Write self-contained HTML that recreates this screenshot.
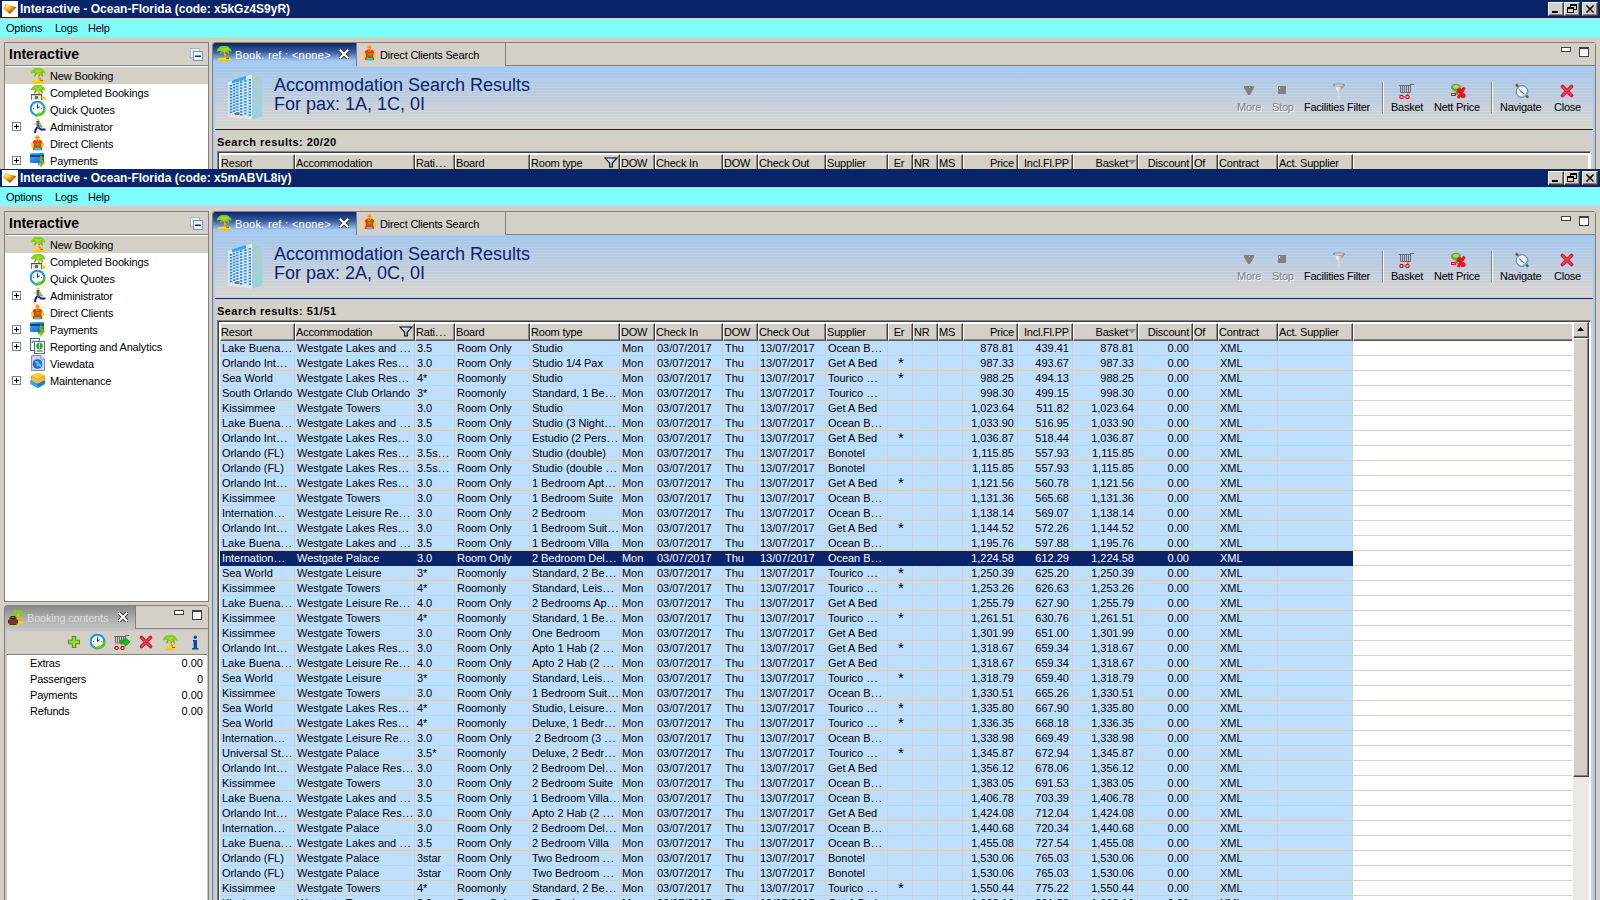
<!DOCTYPE html><html><head><meta charset="utf-8"><style>
*{margin:0;padding:0;box-sizing:border-box}
html,body{width:1600px;height:900px;overflow:hidden;background:#d4d0c8;font-family:"Liberation Sans",sans-serif;font-size:11px;color:#000}
.win{position:absolute;left:0;width:1600px;overflow:hidden;background:#d4d0c8}
.win>*,.win div,.win span,.win svg{position:absolute}
.ic{position:absolute;display:block}
.title{left:0;top:0;width:1600px;height:18px;background:#0a246a}
.ttxt{left:20px;top:1px;font-weight:bold;font-size:12px;color:#fff;line-height:16px;white-space:nowrap}
.tb{top:2px;width:16px;height:14px;background:#d4d0c8;border-top:1px solid #fff;border-left:1px solid #fff;border-right:1px solid #404040;border-bottom:1px solid #404040;box-shadow:inset -1px -1px 0 #808080}
.tbmin{left:3px;top:8px;width:6px;height:2px;background:#000}
.tb svg{left:-1px!important;top:-1px!important}
.tline{left:0;top:18px;width:1600px;height:1px;background:#d4d0c8}
.menu{left:0;top:19px;width:1600px;height:18px;background:#80ffff}
.menu span{top:2px;line-height:14px;white-space:nowrap;letter-spacing:-0.25px}
.lpanel{border:1px solid #808080;background:#fff;overflow:hidden}
.lphead{left:0;top:0;width:203px;height:23px;background:#d4d0c8;border-bottom:1px solid #808080}
.lptitle{left:4px;top:3px;font-weight:bold;font-size:14px;line-height:16px;white-space:nowrap}
.lptree{left:0;top:23px;width:203px;height:600px;background:#fff}
.tsel{left:0;width:203px;height:17px;background:#d4d0c8}
.exp{left:7px;width:9px;height:9px;border:1px solid #808080;background:#fff}
.exp:before{content:"";position:absolute;left:1px;top:3px;width:5px;height:1px;background:#000}
.exp:after{content:"";position:absolute;left:3px;top:1px;width:1px;height:5px;background:#000}
.titem{left:45px;top:1px;line-height:17px;white-space:nowrap;letter-spacing:-0.15px}
.bcpanel{border:1px solid #808080;border-radius:3px 3px 0 0;background:#c8c8c8}
.bctab{left:0;top:0;width:131px;height:25px;background:linear-gradient(#888888,#a8a8a8 40%,#c8c8c8)}
.bctabbar{left:130px;top:0;width:73px;height:23px;background:#d4d0c8;border-bottom:1px solid #808080;border-left:1px solid #808080;border-radius:0 2px 0 0}
.bctxt{left:22px;top:5px;color:#dcdcdc;line-height:14px;white-space:nowrap;letter-spacing:-0.2px}
.bctool{left:2px;top:25px;width:200px;height:24px;background:#d4d0c8;border-bottom:1px solid #808080}
.bcbody{left:2px;top:49px;width:200px;height:400px;background:#fff}
.bck{left:23px;line-height:16px;white-space:nowrap;letter-spacing:-0.2px}
.bcv{right:4px;line-height:16px;white-space:nowrap}
.folder{border:1px solid #808080;border-radius:3px 3px 0 0;background:#d4d0c8}
.tabstrip{left:0;top:0;width:1382px;height:23px;background:#d4d0c8;border-bottom:1px solid #808080}
.atab{left:0;top:0;width:143px;height:24px;background:linear-gradient(#0a246a 0px,#3a5ca0 9px,#a6caf0 18px,#a6caf0 24px);border-radius:2px 0 0 0}
.atxt{left:22px;top:5px;color:#fff;line-height:14px;white-space:nowrap;letter-spacing:0.3px}
.itab{left:143px;top:0;width:150px;height:24px;background:#d4d0c8;border-left:1px solid #808080;border-right:1px solid #808080;border-bottom:1px solid #808080}
.itxt{left:23px;top:5px;line-height:14px;white-space:nowrap;letter-spacing:-0.2px}
.blueside{top:23px;width:2px;height:900px;background:#a6caf0}
.blueside.l{left:0}
.blueside.r{left:1380px}
.hdr{left:2px;top:23px;width:1378px;height:63px;background:repeating-linear-gradient(rgba(255,255,255,0.06) 0 1px,rgba(0,0,0,0.015) 1px 3px),linear-gradient(#a6caf0,#c4d0e0 55%,#dcd8d0)}
.navyline{left:2px;top:86px;width:1378px;height:1px;background:#0a246a}
.htitle{left:274px;margin-top:1px;font-size:18px;color:#0a246a;line-height:20px;white-space:nowrap}
.tool{top:100px;line-height:14px;white-space:nowrap;letter-spacing:-0.25px}
.tool.dis{color:#808080;text-shadow:1px 1px 0 #fff}
.tsep{top:82px;width:2px;height:32px;border-left:1px solid #808080;border-right:1px solid #fff}
.sres{left:217px;top:135px;font-weight:bold;line-height:14px;white-space:nowrap;letter-spacing:0.45px}
.tbl{background:#fff;border-top:1px solid #808080;border-left:1px solid #808080;border-right:1px solid #fff;box-shadow:inset 1px 1px 0 #404040}
.hc{height:18px;background:#d4d0c8;border-top:1px solid #fff;border-left:1px solid #fff;border-right:1px solid #404040;border-bottom:1px solid #5c5a56;box-shadow:inset -1px -1px 0 #8c8984;overflow:hidden}
.ht{top:1px;left:0px;right:3px;line-height:14px;white-space:nowrap;letter-spacing:-0.2px}
.ht.alr{text-align:right}
.ht.alc{text-align:center}
.ht.hs{right:9px}
.hfil{right:1px;top:2px}
.hsort{right:1px;top:5px}
.gline{height:1px;background:#d4d0c8}
.row{height:15px}
.c{top:0;height:15px;background:#bfdfff;border-right:1px solid #d4d0c8;border-bottom:1px solid #d4d0c8;padding:0 0 0 2px;line-height:14px;white-space:pre;overflow:hidden;letter-spacing:-0.05px}
.c.alr{text-align:right;padding:0 3px 0 0;letter-spacing:0}
.c.alc{text-align:center}
.ast{position:static!important;font-size:15px;line-height:14px}
.el{position:static!important;letter-spacing:0.9px;margin-left:0.5px}
.row.sel .c{background:#0a246a;color:#fff;border-color:#0a246a}
.sbtrack{background-color:#ebe9e5}
.sbbtn{background:#d4d0c8;border-top:1px solid #fff;border-left:1px solid #fff;border-right:1px solid #404040;border-bottom:1px solid #404040;box-shadow:inset -1px -1px 0 #808080}
</style></head><body><div class="win" style="top:169px;height:731px"><div class="title"><svg class="ic" style="left:2px;top:1px" width="16" height="16" viewBox="0 0 16 16"><defs><radialGradient id="apg" cx="0.3" cy="0.25" r="0.85"><stop offset="0" stop-color="#fff070"/><stop offset="0.4" stop-color="#f0a818"/><stop offset="0.75" stop-color="#c85010"/><stop offset="1" stop-color="#b03808"/></radialGradient></defs><rect x="0" y="0" width="16" height="16" fill="#fff"/><path d="M1 7.5 L3.5 3 L14.5 6.2 L8 13 Z" fill="url(#apg)"/></svg><span class="ttxt">Interactive - Ocean-Florida (code: x5mABVL8iy)</span><div class="tb" style="left:1548px"><div class="tbmin"></div></div><div class="tb" style="left:1564px"><svg width="16" height="14" style="position:absolute;left:0;top:0"><rect x="6.5" y="2.5" width="6" height="5" fill="none" stroke="#000"/><rect x="6" y="2" width="7" height="2" fill="#000"/><rect x="3.5" y="5.5" width="6" height="5" fill="#d4d0c8" stroke="#000"/><rect x="3" y="5" width="7" height="2" fill="#000"/></svg></div><div class="tb" style="left:1582px"><svg width="16" height="14" style="position:absolute;left:0;top:0"><path d="M4.5 3.5 L11.5 10.5 M11.5 3.5 L4.5 10.5" stroke="#000" stroke-width="1.6"/></svg></div></div><div class="tline"></div><div class="menu"><span style="left:6px">Options</span><span style="left:55px">Logs</span><span style="left:88px">Help</span></div><div class="lpanel" style="left:4px;top:42px;width:205px;height:391px"><div class="lphead"><span class="lptitle">Interactive</span></div><svg class="ic" style="left:185px;top:5px" width="14" height="14" viewBox="0 0 14 14"><rect x="0.5" y="0.5" width="9" height="9" fill="#e8f0ff" stroke="#a8b8d0"/><rect x="3.5" y="3.5" width="9" height="9" fill="#f0f8ff" stroke="#8090b0"/><rect x="5" y="7.5" width="6" height="1.5" fill="#103070"/></svg><div class="lptree"><div class="tsel" style="top:1px"></div><svg class="ic" style="left:25px;top:1px" width="16" height="16" viewBox="0 0 16 16"><path d="M0.5 6.5 C1.5 2.5 5 0.5 8 1.2 C11 0.3 14.5 2 15.8 6.8 C14.5 6 13.5 5.8 12.5 6 C13.3 7.5 13.3 9 12.8 10 C11.8 8.3 10.5 7.2 9 6.8 L7.5 6.8 C6.5 7.3 5.5 8.3 4.5 10 C4 9 4 7.5 5 6.2 C3.8 5.8 2.5 5.8 0.5 6.5Z" fill="#7ed020"/><path d="M3 4 C5 3 7 3 8 4 C9 3 12 3 13 4.5 C11 4 9.5 4.5 8.5 5.5 C7 4.5 5 4 3 4Z" fill="#a8e040"/><path d="M6 6.5 C5.5 7.5 5 8.5 4.8 9.5 M10.5 7 C11.5 8 12 9 12.3 9.8" stroke="#50a810" stroke-width="0.8" fill="none"/><path d="M7.8 5 C8.5 8 9.8 10.5 10 14" stroke="#f0b020" stroke-width="2" fill="none"/><path d="M9 8 L10 8.5 M9.5 11 L10.5 11.5" stroke="#b05010" stroke-width="1"/><ellipse cx="8.5" cy="14.3" rx="7" ry="1.9" fill="#ffd800"/><path d="M3 15 L14 15 L12.5 16.3 L5 16.3Z" fill="#f0c000"/><path d="M10 13.2 L13 13.5" stroke="#604010" stroke-width="0.8"/></svg><span class="titem" style="top:2px">New Booking</span><svg class="ic" style="left:25px;top:18px" width="16" height="16" viewBox="0 0 16 16"><path d="M0.5 6.5 C1.5 2.5 5 0.5 8 1.2 C11 0.3 14.5 2 15.8 6.8 C14.5 6 13.5 5.8 12.5 6 C13.3 7.5 13.3 9 12.8 10 C11.8 8.3 10.5 7.2 9 6.8 L7.5 6.8 C6.5 7.3 5.5 8.3 4.5 10 C4 9 4 7.5 5 6.2 C3.8 5.8 2.5 5.8 0.5 6.5Z" fill="#7ed020"/><path d="M3 4 C5 3 7 3 8 4 C9 3 12 3 13 4.5 C11 4 9.5 4.5 8.5 5.5 C7 4.5 5 4 3 4Z" fill="#a8e040"/><path d="M6 6.5 C5.5 7.5 5 8.5 4.8 9.5 M10.5 7 C11.5 8 12 9 12.3 9.8" stroke="#50a810" stroke-width="0.8" fill="none"/><path d="M7.8 5 C8.5 8 9.8 10.5 10 12" stroke="#f0b020" stroke-width="2" fill="none"/><rect x="1.5" y="10.5" width="10" height="6" fill="#f0f0e0" stroke="#707060" stroke-width="1"/><rect x="1" y="10" width="11" height="1.2" fill="#505040"/><circle cx="6.5" cy="13.5" r="1.8" fill="#706060"/><path d="M12 12.5 L15 12.5 L15.5 15.5 L12 16Z" fill="#ffd000"/></svg><span class="titem" style="top:19px">Completed Bookings</span><svg class="ic" style="left:25px;top:35px" width="16" height="16" viewBox="0 0 16 16"><circle cx="7.5" cy="7.5" r="6.8" fill="#fff" stroke="#1898f0" stroke-width="2.2"/><path d="M7.5 3.5 L7.5 7.5 L10 5.5" stroke="#303030" stroke-width="1" fill="none"/><circle cx="3.5" cy="7.5" r="0.6" fill="#303030"/><circle cx="11.5" cy="7.5" r="0.6" fill="#303030"/><circle cx="7.5" cy="3" r="0.5" fill="#303030"/><path d="M4 12.5 C7 14 11 13 13.5 9 L15 5.5 L15.5 10 C14 14 10 15.8 7 14.5 L6 16.5Z" fill="#58c018"/><path d="M6.5 12 L10.5 11 L9 14.5Z" fill="#80d838"/></svg><span class="titem" style="top:36px">Quick Quotes</span><div class="exp" style="top:56px"></div><svg class="ic" style="left:25px;top:52px" width="16" height="16" viewBox="0 0 16 16"><path d="M6 1 L9 0.5 L10 2.5 L8 3.5Z" fill="#f8c830"/><path d="M6.5 3 L9.5 3 L11 8 L8 9.5 L6.5 8Z" fill="#4060b0"/><path d="M9 4 L11.5 5 L12 9 L9.5 9Z" fill="#f0c030"/><path d="M10 7 L13 8.5 L11 10Z" fill="#50a030"/><path d="M6.5 5.5 L3.5 6.5" stroke="#f8c030" stroke-width="1.3"/><path d="M7.5 9 L5.5 12 L5 15" stroke="#102080" stroke-width="2" fill="none"/><path d="M8.5 9.5 L11 11.5 L15.5 11.5" stroke="#102080" stroke-width="1.8" fill="none"/></svg><span class="titem" style="top:53px">Administrator</span><svg class="ic" style="left:25px;top:69px" width="16" height="16" viewBox="0 0 16 16"><circle cx="7.5" cy="2.5" r="2.2" fill="#f8b010"/><ellipse cx="7.5" cy="2.3" rx="1" ry="0.6" fill="#ff6010"/><path d="M2.5 8 C2.5 5.5 4.5 4.5 7.5 4.5 C10.5 4.5 12.5 5.5 12.5 8 L12 15 L3 15Z" fill="#f83808"/><path d="M2.5 7 C0.5 8 0.5 11 2.5 13 L4 12 L3.5 8Z" fill="#ffd020"/><path d="M12.5 7 C14.5 8 14.5 11 12.5 13 L11 12 L11.5 8Z" fill="#ffd020"/><rect x="6.5" y="8" width="3" height="2.5" fill="#20d040"/><rect x="4.5" y="13" width="6" height="2.5" fill="#20d0e0"/><path d="M6 5 L7.5 7 L9 5" stroke="#ffb020" stroke-width="0.8" fill="none"/></svg><span class="titem" style="top:70px">Direct Clients</span><div class="exp" style="top:90px"></div><svg class="ic" style="left:25px;top:86px" width="16" height="16" viewBox="0 0 16 16"><defs><linearGradient id="pyg" x1="0" y1="0" x2="1" y2="1"><stop offset="0" stop-color="#40b0f8"/><stop offset="1" stop-color="#1060c0"/></linearGradient></defs><rect x="0" y="1" width="14" height="10" rx="1" fill="url(#pyg)"/><rect x="0" y="3" width="14" height="1.8" fill="#0c3870"/><path d="M12 5 C9 5 8.5 8.5 11 9 C13 9.5 13 11.5 10.5 11.5 C9 11.5 8 11 8 11 L8.5 13 C9.5 13.5 13 13.5 14 11.5 C15 9 12 8 11 7.5 C10 7 10.5 6 12 6.2 L13.5 6.8 L14 5.2Z" fill="#90d020" stroke="#508010" stroke-width="0.6"/><path d="M11 3.5 L11 15.5" stroke="#80c020" stroke-width="1.2"/></svg><span class="titem" style="top:87px">Payments</span><div class="exp" style="top:107px"></div><svg class="ic" style="left:25px;top:103px" width="16" height="16" viewBox="0 0 16 16"><rect x="0.5" y="0.5" width="9" height="12" fill="#f8f8f8" stroke="#507090"/><rect x="4.5" y="3.5" width="10" height="12" fill="#fff" stroke="#507090"/><circle cx="9.5" cy="8" r="3.3" fill="#20b030"/><rect x="9" y="5.5" width="1" height="3" fill="#fff"/><rect x="9" y="9.3" width="1" height="1" fill="#fff"/><rect x="6.5" y="12.5" width="6" height="1" fill="#703020"/><path d="M2 5 C2 3 4 3 4.5 4" stroke="#20b030" stroke-width="1.2" fill="none"/></svg><span class="titem" style="top:104px">Reporting and Analytics</span><svg class="ic" style="left:25px;top:120px" width="16" height="16" viewBox="0 0 16 16"><path d="M1.5 0.5 L11 0.5 L14.5 4 L14.5 15.5 L1.5 15.5Z" fill="#c8d4f0" stroke="#8090a8"/><path d="M11 0.5 L11 4 L14.5 4" fill="#fff" stroke="#8090a8"/><circle cx="7.5" cy="9" r="4.8" fill="#5040c0"/><circle cx="8" cy="9" r="3.8" fill="#2080e0"/><path d="M5 7 C7 6 9 8 8 10 C10 9 11 10 10 12" stroke="#40e0f0" stroke-width="1.5" fill="none"/></svg><span class="titem" style="top:121px">Viewdata</span><div class="exp" style="top:141px"></div><svg class="ic" style="left:25px;top:137px" width="16" height="16" viewBox="0 0 16 16"><path d="M0.5 8 L7 11.5 L15 8 L15 12 L8 16 L0.5 12Z" fill="#1880e0"/><path d="M0.5 8 L7 11.5 L8 16 L0.5 12Z" fill="#30a8f0"/><path d="M1 3.5 L8 0.5 L15 3 L8 6.5Z" fill="#f8d030"/><path d="M1 3.5 L8 6.5 L15 3 L15 8 L8 11.5 L1 8Z" fill="#f0a018"/><path d="M2 5.5 L8 8.5 L14 5.5 M2 7 L8 10 L14 7" stroke="#f8e060" stroke-width="0.8" fill="none"/></svg><span class="titem" style="top:138px">Maintenance</span></div></div><div class="bcpanel" style="left:4px;top:436px;width:205px;height:400px"><div class="bctab"><span class="bctxt">Booking contents</span></div><div class="bctabbar"></div><svg class="ic" style="left:3px;top:3px" width="16" height="16" viewBox="0 0 16 16"><path d="M3.5 5 C4.5 1.5 8 0.5 10 1.2 C12.5 0.5 15.5 2 16 5.5 C15 5 14 5 13 5.2 C13.8 6.5 13.8 8 13.3 9 C12.3 7.5 11.5 6.5 10.5 6 L9.5 6 C8.5 6.5 7.5 7.5 6.5 9 C6 8 6 6.5 7 5.3 C6 5 5 5 3.5 5Z" fill="#7ed020"/><path d="M10 5 C10.5 8 11 10 11 14" stroke="#f0b020" stroke-width="1.8" fill="none"/><rect x="0.5" y="9" width="9" height="7" rx="1" fill="#6c4028" stroke="#301808" stroke-width="0.8"/><rect x="3" y="7.5" width="4" height="2" fill="none" stroke="#301808" stroke-width="0.8"/><rect x="0" y="9" width="1.5" height="1.5" fill="#ffd000"/><rect x="8.5" y="9" width="1.5" height="1.5" fill="#ffd000"/><rect x="0" y="14.5" width="1.5" height="1.5" fill="#ffd000"/><rect x="8.5" y="14.5" width="1.5" height="1.5" fill="#ffd000"/><path d="M10 12.5 L15 12 L16 14 L10 15.5Z" fill="#ffd000"/></svg><svg class="ic" style="left:113px;top:6px" width="10" height="10" viewBox="0 0 10 10"><path d="M1.5 1.5 L8.5 8.5 M8.5 1.5 L1.5 8.5" stroke="#303030" stroke-width="4" stroke-linecap="square"/><path d="M1.5 1.5 L8.5 8.5 M8.5 1.5 L1.5 8.5" stroke="#fff" stroke-width="2.2" stroke-linecap="square"/></svg><svg class="ic" style="left:169px;top:4px" width="10" height="5" viewBox="0 0 10 5"><rect x="0.5" y="0.5" width="9" height="4" fill="#fff" stroke="#404040"/></svg><svg class="ic" style="left:187px;top:4px" width="10" height="11" viewBox="0 0 10 11"><rect x="0.5" y="0.5" width="9" height="9" fill="#fff" stroke="#404040"/><rect x="0.5" y="0.5" width="9" height="1.5" fill="#404040"/></svg><div class="bctool"></div><svg class="ic" style="left:61px;top:28px" width="16" height="16" viewBox="0 0 16 16"><path d="M8 2 L8 14 M2 8 L14 8" stroke="#408020" stroke-width="4.5"/><path d="M8 2.8 L8 13.2 M2.8 8 L13.2 8" stroke="#a0d040" stroke-width="2.8"/></svg><svg class="ic" style="left:85px;top:28px" width="16" height="16" viewBox="0 0 16 16"><circle cx="7.5" cy="7.5" r="6.8" fill="#fff" stroke="#1898f0" stroke-width="2.2"/><path d="M7.5 3.5 L7.5 7.5 L10 5.5" stroke="#303030" stroke-width="1" fill="none"/><circle cx="3.5" cy="7.5" r="0.6" fill="#303030"/><circle cx="11.5" cy="7.5" r="0.6" fill="#303030"/><circle cx="7.5" cy="3" r="0.5" fill="#303030"/><path d="M4 12.5 C7 14 11 13 13.5 9 L15 5.5 L15.5 10 C14 14 10 15.8 7 14.5 L6 16.5Z" fill="#58c018"/><path d="M6.5 12 L10.5 11 L9 14.5Z" fill="#80d838"/></svg><svg class="ic" style="left:109px;top:28px" width="16" height="16" viewBox="0 0 16 16"><path d="M0 2.5 L11 2.5 M1.5 2.5 L1.5 8.5 M3.5 2.5 L3.5 8.5 M5.5 2.5 L5.5 8.5 M7.5 2.5 L7.5 8.5 M9.5 2.5 L9.5 8.5 M1.5 9 L11 9 M11.5 1 L11.5 9 M11.5 1.5 L15 1.5" stroke="#6c6c6c" stroke-width="1" fill="none"/><circle cx="2.5" cy="14" r="1.6" fill="#fff" stroke="#f00000" stroke-width="1.2"/><circle cx="8.5" cy="14" r="1.6" fill="#fff" stroke="#f00000" stroke-width="1.2"/><path d="M6.5 6 L11 6 L11 3.5 L16 8 L11 12.5 L11 10 L6.5 10Z" fill="#10c020" stroke="#087010" stroke-width="0.6"/></svg><svg class="ic" style="left:133px;top:28px" width="16" height="16" viewBox="0 0 16 16"><path d="M3.5 3.5 L12.5 12.5 M12.5 3.5 L3.5 12.5" stroke="#d81830" stroke-width="3.6" stroke-linecap="round"/><path d="M4 4 L12 12 M12 4 L4 12" stroke="#f04858" stroke-width="1.4" stroke-linecap="round"/></svg><svg class="ic" style="left:157px;top:28px" width="16" height="16" viewBox="0 0 16 16"><path d="M0.5 6.5 C1.5 2.5 5 0.5 8 1.2 C11 0.3 14.5 2 15.8 6.8 C14.5 6 13.5 5.8 12.5 6 C13.3 7.5 13.3 9 12.8 10 C11.8 8.3 10.5 7.2 9 6.8 L7.5 6.8 C6.5 7.3 5.5 8.3 4.5 10 C4 9 4 7.5 5 6.2 C3.8 5.8 2.5 5.8 0.5 6.5Z" fill="#7ed020"/><path d="M3 4 C5 3 7 3 8 4 C9 3 12 3 13 4.5 C11 4 9.5 4.5 8.5 5.5 C7 4.5 5 4 3 4Z" fill="#a8e040"/><path d="M6 6.5 C5.5 7.5 5 8.5 4.8 9.5 M10.5 7 C11.5 8 12 9 12.3 9.8" stroke="#50a810" stroke-width="0.8" fill="none"/><path d="M7.8 5 C8.5 8 9.8 10.5 10 14" stroke="#f0b020" stroke-width="2" fill="none"/><path d="M9 8 L10 8.5 M9.5 11 L10.5 11.5" stroke="#b05010" stroke-width="1"/><ellipse cx="8.5" cy="14.3" rx="7" ry="1.9" fill="#ffd800"/><path d="M3 15 L14 15 L12.5 16.3 L5 16.3Z" fill="#f0c000"/><path d="M10 13.2 L13 13.5" stroke="#604010" stroke-width="0.8"/></svg><svg class="ic" style="left:182px;top:28px" width="16" height="16" viewBox="0 0 16 16"><path d="M6 6 L10 6 L10 14 L11.5 14 L11.5 15.5 L5 15.5 L5 14 L6.5 14 L6.5 7.5 L6 7.5Z" fill="#0c4aa8"/><circle cx="8.3" cy="3.3" r="1.7" fill="#0c4aa8"/></svg><div class="bcbody"><span class="bck" style="top:0px">Extras</span><span class="bcv" style="top:0px">0.00</span><span class="bck" style="top:16px">Passengers</span><span class="bcv" style="top:16px">0</span><span class="bck" style="top:32px">Payments</span><span class="bcv" style="top:32px">0.00</span><span class="bck" style="top:48px">Refunds</span><span class="bcv" style="top:48px">0.00</span></div></div><div class="folder" style="left:212px;top:42px;width:1384px;height:900px"><div class="tabstrip"></div><div class="atab"><span class="atxt">Book. ref.: &lt;none&gt;</span></div><svg class="ic" style="left:3px;top:2px" width="17" height="17" viewBox="0 0 17 17"><path d="M0.5 6.5 C1.5 2.5 5 0.5 8 1.2 C11 0.3 14.5 2 15.8 6.8 C14.5 6 13.5 5.8 12.5 6 C13.3 7.5 13.3 9 12.8 10 C11.8 8.3 10.5 7.2 9 6.8 L7.5 6.8 C6.5 7.3 5.5 8.3 4.5 10 C4 9 4 7.5 5 6.2 C3.8 5.8 2.5 5.8 0.5 6.5Z" fill="#7ed020"/><path d="M3 4 C5 3 7 3 8 4 C9 3 12 3 13 4.5 C11 4 9.5 4.5 8.5 5.5 C7 4.5 5 4 3 4Z" fill="#a8e040"/><path d="M6 6.5 C5.5 7.5 5 8.5 4.8 9.5 M10.5 7 C11.5 8 12 9 12.3 9.8" stroke="#50a810" stroke-width="0.8" fill="none"/><path d="M7.8 5 C8.5 8 9.8 10.5 10 14" stroke="#f0b020" stroke-width="2" fill="none"/><path d="M9 8 L10 8.5 M9.5 11 L10.5 11.5" stroke="#b05010" stroke-width="1"/><ellipse cx="8.5" cy="14.3" rx="7" ry="1.9" fill="#ffd800"/><path d="M3 15 L14 15 L12.5 16.3 L5 16.3Z" fill="#f0c000"/><path d="M10 13.2 L13 13.5" stroke="#604010" stroke-width="0.8"/></svg><svg class="ic" style="left:126px;top:6px" width="10" height="10" viewBox="0 0 10 10"><path d="M1.5 1.5 L8.5 8.5 M8.5 1.5 L1.5 8.5" stroke="#303030" stroke-width="4" stroke-linecap="square"/><path d="M1.5 1.5 L8.5 8.5 M8.5 1.5 L1.5 8.5" stroke="#fff" stroke-width="2.2" stroke-linecap="square"/></svg><div class="itab"><span class="itxt">Direct Clients Search</span></div><svg class="ic" style="left:149px;top:2px" width="16" height="16" viewBox="0 0 16 16"><circle cx="7.5" cy="2.5" r="2.2" fill="#f8b010"/><ellipse cx="7.5" cy="2.3" rx="1" ry="0.6" fill="#ff6010"/><path d="M2.5 8 C2.5 5.5 4.5 4.5 7.5 4.5 C10.5 4.5 12.5 5.5 12.5 8 L12 15 L3 15Z" fill="#f83808"/><path d="M2.5 7 C0.5 8 0.5 11 2.5 13 L4 12 L3.5 8Z" fill="#ffd020"/><path d="M12.5 7 C14.5 8 14.5 11 12.5 13 L11 12 L11.5 8Z" fill="#ffd020"/><rect x="6.5" y="8" width="3" height="2.5" fill="#20d040"/><rect x="4.5" y="13" width="6" height="2.5" fill="#20d0e0"/><path d="M6 5 L7.5 7 L9 5" stroke="#ffb020" stroke-width="0.8" fill="none"/></svg><svg class="ic" style="left:1348px;top:4px" width="10" height="5" viewBox="0 0 10 5"><rect x="0.5" y="0.5" width="9" height="4" fill="#fff" stroke="#404040"/></svg><svg class="ic" style="left:1366px;top:4px" width="10" height="11" viewBox="0 0 10 11"><rect x="0.5" y="0.5" width="9" height="9" fill="#fff" stroke="#404040"/><rect x="0.5" y="0.5" width="9" height="1.5" fill="#404040"/></svg><div class="blueside l"></div><div class="blueside r"></div><div class="hdr"></div><div class="navyline"></div></div><svg class="ic" style="left:228px;top:74px" width="36" height="48" viewBox="0 0 36 48"><defs><linearGradient id="bgr" x1="0" y1="0" x2="1" y2="1"><stop offset="0" stop-color="#b8c8c8"/><stop offset="1" stop-color="#90d8e0"/></linearGradient></defs><path d="M0 8 L24 0.5 L24 45.6 L0 42.7 Z" fill="#e4eaec"/><path d="M24 0.5 L34 4.5 L34 42.7 L24 45.6 Z" fill="url(#bgr)"/><path d="M4 6.5 L18 2 L18 5.5 L4 9.5Z" fill="#30a8f0"/><rect x="1.8" y="11.0" width="2.4" height="1.7" fill="#1890e8"/><rect x="1.8" y="13.9" width="2.4" height="1.7" fill="#1890e8"/><rect x="1.8" y="16.9" width="2.4" height="1.7" fill="#1890e8"/><rect x="1.8" y="19.9" width="2.4" height="1.7" fill="#1890e8"/><rect x="1.8" y="22.8" width="2.4" height="1.7" fill="#1890e8"/><rect x="1.8" y="25.8" width="2.4" height="1.7" fill="#1890e8"/><rect x="1.8" y="28.7" width="2.4" height="1.7" fill="#1890e8"/><rect x="1.8" y="31.7" width="2.4" height="1.7" fill="#1890e8"/><rect x="1.8" y="34.6" width="2.4" height="1.7" fill="#1890e8"/><rect x="1.8" y="37.5" width="2.4" height="1.7" fill="#1890e8"/><rect x="5.0" y="9.8" width="2.4" height="1.7" fill="#1890e8"/><rect x="5.0" y="12.8" width="2.4" height="1.7" fill="#1890e8"/><rect x="5.0" y="15.7" width="2.4" height="1.7" fill="#1890e8"/><rect x="5.0" y="18.7" width="2.4" height="1.7" fill="#1890e8"/><rect x="5.0" y="21.6" width="2.4" height="1.7" fill="#1890e8"/><rect x="5.0" y="24.6" width="2.4" height="1.7" fill="#1890e8"/><rect x="5.0" y="27.5" width="2.4" height="1.7" fill="#1890e8"/><rect x="5.0" y="30.5" width="2.4" height="1.7" fill="#1890e8"/><rect x="5.0" y="33.4" width="2.4" height="1.7" fill="#1890e8"/><rect x="5.0" y="36.4" width="2.4" height="1.7" fill="#1890e8"/><rect x="8.2" y="8.6" width="2.4" height="1.7" fill="#1890e8"/><rect x="8.2" y="11.6" width="2.4" height="1.7" fill="#1890e8"/><rect x="8.2" y="14.5" width="2.4" height="1.7" fill="#1890e8"/><rect x="8.2" y="17.5" width="2.4" height="1.7" fill="#1890e8"/><rect x="8.2" y="20.4" width="2.4" height="1.7" fill="#1890e8"/><rect x="8.2" y="23.4" width="2.4" height="1.7" fill="#1890e8"/><rect x="8.2" y="26.3" width="2.4" height="1.7" fill="#1890e8"/><rect x="8.2" y="29.2" width="2.4" height="1.7" fill="#1890e8"/><rect x="8.2" y="32.2" width="2.4" height="1.7" fill="#1890e8"/><rect x="8.2" y="35.1" width="2.4" height="1.7" fill="#1890e8"/><rect x="8.2" y="38.1" width="2.4" height="1.7" fill="#1890e8"/><rect x="12.0" y="7.4" width="2.4" height="1.7" fill="#1890e8"/><rect x="12.0" y="10.4" width="2.4" height="1.7" fill="#1890e8"/><rect x="12.0" y="13.3" width="2.4" height="1.7" fill="#1890e8"/><rect x="12.0" y="16.2" width="2.4" height="1.7" fill="#1890e8"/><rect x="12.0" y="19.2" width="2.4" height="1.7" fill="#1890e8"/><rect x="12.0" y="22.1" width="2.4" height="1.7" fill="#1890e8"/><rect x="12.0" y="25.1" width="2.4" height="1.7" fill="#1890e8"/><rect x="12.0" y="28.1" width="2.4" height="1.7" fill="#1890e8"/><rect x="12.0" y="31.0" width="2.4" height="1.7" fill="#1890e8"/><rect x="12.0" y="34.0" width="2.4" height="1.7" fill="#1890e8"/><rect x="12.0" y="36.9" width="2.4" height="1.7" fill="#1890e8"/><rect x="12.0" y="39.9" width="2.4" height="1.7" fill="#1890e8"/><rect x="16.2" y="6.2" width="2.4" height="1.7" fill="#1890e8"/><rect x="16.2" y="9.2" width="2.4" height="1.7" fill="#1890e8"/><rect x="16.2" y="12.1" width="2.4" height="1.7" fill="#1890e8"/><rect x="16.2" y="15.1" width="2.4" height="1.7" fill="#1890e8"/><rect x="16.2" y="18.0" width="2.4" height="1.7" fill="#1890e8"/><rect x="16.2" y="20.9" width="2.4" height="1.7" fill="#1890e8"/><rect x="16.2" y="23.9" width="2.4" height="1.7" fill="#1890e8"/><rect x="16.2" y="26.9" width="2.4" height="1.7" fill="#1890e8"/><rect x="16.2" y="29.8" width="2.4" height="1.7" fill="#1890e8"/><rect x="16.2" y="32.8" width="2.4" height="1.7" fill="#1890e8"/><rect x="16.2" y="35.7" width="2.4" height="1.7" fill="#1890e8"/><rect x="16.2" y="38.7" width="2.4" height="1.7" fill="#1890e8"/><rect x="20.6" y="5.0" width="2.4" height="1.7" fill="#1890e8"/><rect x="20.6" y="8.0" width="2.4" height="1.7" fill="#1890e8"/><rect x="20.6" y="10.9" width="2.4" height="1.7" fill="#1890e8"/><rect x="20.6" y="13.9" width="2.4" height="1.7" fill="#1890e8"/><rect x="20.6" y="16.8" width="2.4" height="1.7" fill="#1890e8"/><rect x="20.6" y="19.8" width="2.4" height="1.7" fill="#1890e8"/><rect x="20.6" y="22.7" width="2.4" height="1.7" fill="#1890e8"/><rect x="20.6" y="25.7" width="2.4" height="1.7" fill="#1890e8"/><rect x="20.6" y="28.6" width="2.4" height="1.7" fill="#1890e8"/><rect x="20.6" y="31.6" width="2.4" height="1.7" fill="#1890e8"/><rect x="20.6" y="34.5" width="2.4" height="1.7" fill="#1890e8"/><rect x="20.6" y="37.5" width="2.4" height="1.7" fill="#1890e8"/><rect x="20.6" y="40.4" width="2.4" height="1.7" fill="#1890e8"/><path d="M1.2 10.0 L1.2 43.0" stroke="#c0c8cc" stroke-width="0.5"/><path d="M4.4 8.5 L4.4 43.5" stroke="#c0c8cc" stroke-width="0.5"/><path d="M7.6 7.0 L7.6 44.0" stroke="#c0c8cc" stroke-width="0.5"/><path d="M11.4 5.5 L11.4 44.5" stroke="#c0c8cc" stroke-width="0.5"/><path d="M15.6 4.0 L15.6 45.0" stroke="#c0c8cc" stroke-width="0.5"/><path d="M20.0 2.5 L20.0 45.5" stroke="#c0c8cc" stroke-width="0.5"/><path d="M6 39 L12 38.5 L11 41 L7 41Z" fill="#707878"/></svg><div class="htitle" style="top:74px">Accommodation Search Results</div><div class="htitle" style="top:93px">For pax: 2A, 0C, 0I</div><svg class="ic" style="left:1241px;top:83px" width="16" height="16" viewBox="0 0 16 16"><path d="M3 3 L13 3 L13 5 L9 12 L7 12 L3 5 Z" fill="#808080"/><rect x="8" y="4" width="1" height="1" fill="#fff"/></svg><span class="tool dis" style="left:1237px">More</span><svg class="ic" style="left:1276px;top:83px" width="16" height="16" viewBox="0 0 16 16"><rect x="2" y="3" width="8" height="8" fill="#808080"/><rect x="3" y="4" width="1" height="2" fill="#fff"/></svg><span class="tool dis" style="left:1272px">Stop</span><svg class="ic" style="left:1331px;top:83px" width="16" height="16" viewBox="0 0 16 16"><defs><linearGradient id="fng" x1="0" x2="1"><stop offset="0" stop-color="#a8a8a8"/><stop offset="0.35" stop-color="#f4f4f4"/><stop offset="0.7" stop-color="#b0b0b0"/><stop offset="1" stop-color="#787878"/></linearGradient></defs><path d="M2 2 L14 2 L9 9 L8.8 15.5 L7.4 15.5 L7.2 9 Z" fill="url(#fng)"/><ellipse cx="8" cy="2" rx="6" ry="1.6" fill="#8c8c8c"/><ellipse cx="8" cy="2.2" rx="4.5" ry="0.9" fill="#d0d0d0"/></svg><span class="tool" style="left:1304px">Facilities Filter</span><svg class="ic" style="left:1399px;top:83px" width="16" height="16" viewBox="0 0 16 16"><path d="M0 2.5 L11 2.5 M1.5 2.5 L1.5 9 M3.5 2.5 L3.5 9 M5.5 2.5 L5.5 9 M7.5 2.5 L7.5 9 M9.5 2.5 L9.5 9 M1.5 9.5 L11.5 9.5 M11.5 1 L11.5 9.5 M11.5 1.5 L15 1.5 M9.5 9.5 L8.5 12" stroke="#6c6c6c" stroke-width="1" fill="none"/><circle cx="2.5" cy="14" r="1.6" fill="#fff" stroke="#f00000" stroke-width="1.2"/><circle cx="8.5" cy="14" r="1.6" fill="#fff" stroke="#f00000" stroke-width="1.2"/><path d="M4.2 14 L6.8 14" stroke="#707070"/></svg><span class="tool" style="left:1391px">Basket</span><svg class="ic" style="left:1450px;top:83px" width="16" height="16" viewBox="0 0 16 16"><ellipse cx="6" cy="4.5" rx="5" ry="3.8" fill="#6aa828"/><ellipse cx="6" cy="3.8" rx="3" ry="1.8" fill="#b0d870"/><path d="M6 8 L9 8 L8 12 L5 11Z" fill="#58a020"/><circle cx="9.5" cy="7.5" r="2.6" fill="#f01020"/><circle cx="13" cy="12.5" r="2.6" fill="#f01020"/><path d="M14.5 4.5 L8 15" stroke="#f01020" stroke-width="3"/><rect x="1" y="10" width="5" height="3" fill="#f01020"/><rect x="2" y="11" width="3" height="1" fill="#ffa0a0"/></svg><span class="tool" style="left:1434px">Nett Price</span><svg class="ic" style="left:1514px;top:83px" width="16" height="16" viewBox="0 0 16 16"><path d="M1 2 L3 0.5 L5 3 L3 4.5Z" fill="#805020"/><path d="M11 13 L13 11.5 L15 14 L13 15.5Z" fill="#805020"/><circle cx="8" cy="8.5" r="5.8" fill="#f0f4f8" stroke="#3080c0" stroke-width="1"/><path d="M8.5 13.5 A5 5 0 0 0 13 9" stroke="#40d0f0" stroke-width="1.5" fill="none"/><path d="M4 5 L8 8.5 L7 9.5Z" fill="#2080e0"/><path d="M7 9.5 L8 8.5 L12 12Z" fill="#f02010"/></svg><span class="tool" style="left:1500px">Navigate</span><svg class="ic" style="left:1559px;top:83px" width="16" height="16" viewBox="0 0 16 16"><path d="M3.5 3.5 L12.5 12.5 M12.5 3.5 L3.5 12.5" stroke="#d81830" stroke-width="3.6" stroke-linecap="round"/><path d="M4 4 L12 12 M12 4 L4 12" stroke="#f04858" stroke-width="1.4" stroke-linecap="round"/></svg><span class="tool" style="left:1554px">Close</span><div class="tsep" style="left:1382px"></div><div class="tsep" style="left:1491px"></div><div class="sres">Search results: 51/51</div><div class="tbl" style="left:217px;top:151px;width:1374px;height:900px"><div class="hc" style="left:2px;top:2px;width:75px"><span class="ht all">Resort</span></div><div class="hc" style="left:77px;top:2px;width:120px"><span class="ht all">Accommodation</span><svg class="hfil" width="14" height="11" viewBox="0 0 14 11"><defs><linearGradient id="flg" x1="0" x2="1"><stop offset="0" stop-color="#fff"/><stop offset="1" stop-color="#90b0e0"/></linearGradient></defs><path d="M1 1 L13 1 L8.3 6.2 L8.3 10 L5.7 10 L5.7 6.2 Z" fill="url(#flg)" stroke="#000" stroke-width="1.1" stroke-linejoin="miter"/></svg></div><div class="hc" style="left:197px;top:2px;width:40px"><span class="ht all">Rati<span class="el">...</span></span></div><div class="hc" style="left:237px;top:2px;width:75px"><span class="ht all">Board</span></div><div class="hc" style="left:312px;top:2px;width:90px"><span class="ht all">Room type</span></div><div class="hc" style="left:402px;top:2px;width:35px"><span class="ht all">DOW</span></div><div class="hc" style="left:437px;top:2px;width:68px"><span class="ht all">Check In</span></div><div class="hc" style="left:505px;top:2px;width:35px"><span class="ht all">DOW</span></div><div class="hc" style="left:540px;top:2px;width:68px"><span class="ht all">Check Out</span></div><div class="hc" style="left:608px;top:2px;width:62px"><span class="ht all">Supplier</span></div><div class="hc" style="left:670px;top:2px;width:25px"><span class="ht alc">Er</span></div><div class="hc" style="left:695px;top:2px;width:25px"><span class="ht all">NR</span></div><div class="hc" style="left:720px;top:2px;width:25px"><span class="ht all">MS</span></div><div class="hc" style="left:745px;top:2px;width:55px"><span class="ht alr">Price</span></div><div class="hc" style="left:800px;top:2px;width:55px"><span class="ht alr">Incl.Fl.PP</span></div><div class="hc" style="left:855px;top:2px;width:65px"><span class="ht alr hs">Basket</span><svg class="hsort" width="8" height="5" viewBox="0 0 8 5"><path d="M0 0 L8 0 L4 4.5 Z" fill="#8c8c8c"/></svg></div><div class="hc" style="left:920px;top:2px;width:55px"><span class="ht alr">Discount</span></div><div class="hc" style="left:975px;top:2px;width:25px"><span class="ht all">Of</span></div><div class="hc" style="left:1000px;top:2px;width:60px"><span class="ht all">Contract</span></div><div class="hc" style="left:1060px;top:2px;width:75px"><span class="ht all">Act. Supplier</span></div><div class="hc" style="left:1135px;top:2px;width:219px;border-right:none;box-shadow:inset 0 -1px 0 #808080"></div><div class="gline" style="top:34px;left:1135px;width:219px"></div><div class="gline" style="top:49px;left:1135px;width:219px"></div><div class="gline" style="top:64px;left:1135px;width:219px"></div><div class="gline" style="top:79px;left:1135px;width:219px"></div><div class="gline" style="top:94px;left:1135px;width:219px"></div><div class="gline" style="top:109px;left:1135px;width:219px"></div><div class="gline" style="top:124px;left:1135px;width:219px"></div><div class="gline" style="top:139px;left:1135px;width:219px"></div><div class="gline" style="top:154px;left:1135px;width:219px"></div><div class="gline" style="top:169px;left:1135px;width:219px"></div><div class="gline" style="top:184px;left:1135px;width:219px"></div><div class="gline" style="top:199px;left:1135px;width:219px"></div><div class="gline" style="top:214px;left:1135px;width:219px"></div><div class="gline" style="top:229px;left:1135px;width:219px"></div><div class="gline" style="top:244px;left:1135px;width:219px"></div><div class="gline" style="top:259px;left:1135px;width:219px"></div><div class="gline" style="top:274px;left:1135px;width:219px"></div><div class="gline" style="top:289px;left:1135px;width:219px"></div><div class="gline" style="top:304px;left:1135px;width:219px"></div><div class="gline" style="top:319px;left:1135px;width:219px"></div><div class="gline" style="top:334px;left:1135px;width:219px"></div><div class="gline" style="top:349px;left:1135px;width:219px"></div><div class="gline" style="top:364px;left:1135px;width:219px"></div><div class="gline" style="top:379px;left:1135px;width:219px"></div><div class="gline" style="top:394px;left:1135px;width:219px"></div><div class="gline" style="top:409px;left:1135px;width:219px"></div><div class="gline" style="top:424px;left:1135px;width:219px"></div><div class="gline" style="top:439px;left:1135px;width:219px"></div><div class="gline" style="top:454px;left:1135px;width:219px"></div><div class="gline" style="top:469px;left:1135px;width:219px"></div><div class="gline" style="top:484px;left:1135px;width:219px"></div><div class="gline" style="top:499px;left:1135px;width:219px"></div><div class="gline" style="top:514px;left:1135px;width:219px"></div><div class="gline" style="top:529px;left:1135px;width:219px"></div><div class="gline" style="top:544px;left:1135px;width:219px"></div><div class="gline" style="top:559px;left:1135px;width:219px"></div><div class="gline" style="top:574px;left:1135px;width:219px"></div><div class="gline" style="top:589px;left:1135px;width:219px"></div><div class="row" style="top:20px;left:2px;width:1133px"><div class="c all" style="left:0px;width:75px">Lake Buena<span class="el">...</span></div><div class="c all" style="left:75px;width:120px">Westgate Lakes and <span class="el">...</span></div><div class="c all" style="left:195px;width:40px">3.5</div><div class="c all" style="left:235px;width:75px">Room Only</div><div class="c all" style="left:310px;width:90px">Studio</div><div class="c all" style="left:400px;width:35px">Mon</div><div class="c all" style="left:435px;width:68px">03/07/2017</div><div class="c all" style="left:503px;width:35px">Thu</div><div class="c all" style="left:538px;width:68px">13/07/2017</div><div class="c all" style="left:606px;width:62px">Ocean B<span class="el">...</span></div><div class="c alc" style="left:668px;width:25px"></div><div class="c all" style="left:693px;width:25px"></div><div class="c all" style="left:718px;width:25px"></div><div class="c alr" style="left:743px;width:55px">878.81</div><div class="c alr" style="left:798px;width:55px">439.41</div><div class="c alr" style="left:853px;width:65px">878.81</div><div class="c alr" style="left:918px;width:55px">0.00</div><div class="c all" style="left:973px;width:25px"></div><div class="c all" style="left:998px;width:60px">XML</div><div class="c all" style="left:1058px;width:75px"></div></div><div class="row" style="top:35px;left:2px;width:1133px"><div class="c all" style="left:0px;width:75px">Orlando Int<span class="el">...</span></div><div class="c all" style="left:75px;width:120px">Westgate Lakes Res<span class="el">...</span></div><div class="c all" style="left:195px;width:40px">3.0</div><div class="c all" style="left:235px;width:75px">Room Only</div><div class="c all" style="left:310px;width:90px">Studio 1/4 Pax</div><div class="c all" style="left:400px;width:35px">Mon</div><div class="c all" style="left:435px;width:68px">03/07/2017</div><div class="c all" style="left:503px;width:35px">Thu</div><div class="c all" style="left:538px;width:68px">13/07/2017</div><div class="c all" style="left:606px;width:62px">Get A Bed</div><div class="c alc" style="left:668px;width:25px"><span class="ast">*</span></div><div class="c all" style="left:693px;width:25px"></div><div class="c all" style="left:718px;width:25px"></div><div class="c alr" style="left:743px;width:55px">987.33</div><div class="c alr" style="left:798px;width:55px">493.67</div><div class="c alr" style="left:853px;width:65px">987.33</div><div class="c alr" style="left:918px;width:55px">0.00</div><div class="c all" style="left:973px;width:25px"></div><div class="c all" style="left:998px;width:60px">XML</div><div class="c all" style="left:1058px;width:75px"></div></div><div class="row" style="top:50px;left:2px;width:1133px"><div class="c all" style="left:0px;width:75px">Sea World</div><div class="c all" style="left:75px;width:120px">Westgate Lakes Res<span class="el">...</span></div><div class="c all" style="left:195px;width:40px">4*</div><div class="c all" style="left:235px;width:75px">Roomonly</div><div class="c all" style="left:310px;width:90px">Studio</div><div class="c all" style="left:400px;width:35px">Mon</div><div class="c all" style="left:435px;width:68px">03/07/2017</div><div class="c all" style="left:503px;width:35px">Thu</div><div class="c all" style="left:538px;width:68px">13/07/2017</div><div class="c all" style="left:606px;width:62px">Tourico <span class="el">...</span></div><div class="c alc" style="left:668px;width:25px"><span class="ast">*</span></div><div class="c all" style="left:693px;width:25px"></div><div class="c all" style="left:718px;width:25px"></div><div class="c alr" style="left:743px;width:55px">988.25</div><div class="c alr" style="left:798px;width:55px">494.13</div><div class="c alr" style="left:853px;width:65px">988.25</div><div class="c alr" style="left:918px;width:55px">0.00</div><div class="c all" style="left:973px;width:25px"></div><div class="c all" style="left:998px;width:60px">XML</div><div class="c all" style="left:1058px;width:75px"></div></div><div class="row" style="top:65px;left:2px;width:1133px"><div class="c all" style="left:0px;width:75px">South Orlando</div><div class="c all" style="left:75px;width:120px">Westgate Club Orlando</div><div class="c all" style="left:195px;width:40px">3*</div><div class="c all" style="left:235px;width:75px">Roomonly</div><div class="c all" style="left:310px;width:90px">Standard, 1 Be<span class="el">...</span></div><div class="c all" style="left:400px;width:35px">Mon</div><div class="c all" style="left:435px;width:68px">03/07/2017</div><div class="c all" style="left:503px;width:35px">Thu</div><div class="c all" style="left:538px;width:68px">13/07/2017</div><div class="c all" style="left:606px;width:62px">Tourico <span class="el">...</span></div><div class="c alc" style="left:668px;width:25px"></div><div class="c all" style="left:693px;width:25px"></div><div class="c all" style="left:718px;width:25px"></div><div class="c alr" style="left:743px;width:55px">998.30</div><div class="c alr" style="left:798px;width:55px">499.15</div><div class="c alr" style="left:853px;width:65px">998.30</div><div class="c alr" style="left:918px;width:55px">0.00</div><div class="c all" style="left:973px;width:25px"></div><div class="c all" style="left:998px;width:60px">XML</div><div class="c all" style="left:1058px;width:75px"></div></div><div class="row" style="top:80px;left:2px;width:1133px"><div class="c all" style="left:0px;width:75px">Kissimmee</div><div class="c all" style="left:75px;width:120px">Westgate Towers</div><div class="c all" style="left:195px;width:40px">3.0</div><div class="c all" style="left:235px;width:75px">Room Only</div><div class="c all" style="left:310px;width:90px">Studio</div><div class="c all" style="left:400px;width:35px">Mon</div><div class="c all" style="left:435px;width:68px">03/07/2017</div><div class="c all" style="left:503px;width:35px">Thu</div><div class="c all" style="left:538px;width:68px">13/07/2017</div><div class="c all" style="left:606px;width:62px">Get A Bed</div><div class="c alc" style="left:668px;width:25px"></div><div class="c all" style="left:693px;width:25px"></div><div class="c all" style="left:718px;width:25px"></div><div class="c alr" style="left:743px;width:55px">1,023.64</div><div class="c alr" style="left:798px;width:55px">511.82</div><div class="c alr" style="left:853px;width:65px">1,023.64</div><div class="c alr" style="left:918px;width:55px">0.00</div><div class="c all" style="left:973px;width:25px"></div><div class="c all" style="left:998px;width:60px">XML</div><div class="c all" style="left:1058px;width:75px"></div></div><div class="row" style="top:95px;left:2px;width:1133px"><div class="c all" style="left:0px;width:75px">Lake Buena<span class="el">...</span></div><div class="c all" style="left:75px;width:120px">Westgate Lakes and <span class="el">...</span></div><div class="c all" style="left:195px;width:40px">3.5</div><div class="c all" style="left:235px;width:75px">Room Only</div><div class="c all" style="left:310px;width:90px">Studio (3 Night<span class="el">...</span></div><div class="c all" style="left:400px;width:35px">Mon</div><div class="c all" style="left:435px;width:68px">03/07/2017</div><div class="c all" style="left:503px;width:35px">Thu</div><div class="c all" style="left:538px;width:68px">13/07/2017</div><div class="c all" style="left:606px;width:62px">Ocean B<span class="el">...</span></div><div class="c alc" style="left:668px;width:25px"></div><div class="c all" style="left:693px;width:25px"></div><div class="c all" style="left:718px;width:25px"></div><div class="c alr" style="left:743px;width:55px">1,033.90</div><div class="c alr" style="left:798px;width:55px">516.95</div><div class="c alr" style="left:853px;width:65px">1,033.90</div><div class="c alr" style="left:918px;width:55px">0.00</div><div class="c all" style="left:973px;width:25px"></div><div class="c all" style="left:998px;width:60px">XML</div><div class="c all" style="left:1058px;width:75px"></div></div><div class="row" style="top:110px;left:2px;width:1133px"><div class="c all" style="left:0px;width:75px">Orlando Int<span class="el">...</span></div><div class="c all" style="left:75px;width:120px">Westgate Lakes Res<span class="el">...</span></div><div class="c all" style="left:195px;width:40px">3.0</div><div class="c all" style="left:235px;width:75px">Room Only</div><div class="c all" style="left:310px;width:90px">Estudio (2 Pers<span class="el">...</span></div><div class="c all" style="left:400px;width:35px">Mon</div><div class="c all" style="left:435px;width:68px">03/07/2017</div><div class="c all" style="left:503px;width:35px">Thu</div><div class="c all" style="left:538px;width:68px">13/07/2017</div><div class="c all" style="left:606px;width:62px">Get A Bed</div><div class="c alc" style="left:668px;width:25px"><span class="ast">*</span></div><div class="c all" style="left:693px;width:25px"></div><div class="c all" style="left:718px;width:25px"></div><div class="c alr" style="left:743px;width:55px">1,036.87</div><div class="c alr" style="left:798px;width:55px">518.44</div><div class="c alr" style="left:853px;width:65px">1,036.87</div><div class="c alr" style="left:918px;width:55px">0.00</div><div class="c all" style="left:973px;width:25px"></div><div class="c all" style="left:998px;width:60px">XML</div><div class="c all" style="left:1058px;width:75px"></div></div><div class="row" style="top:125px;left:2px;width:1133px"><div class="c all" style="left:0px;width:75px">Orlando (FL)</div><div class="c all" style="left:75px;width:120px">Westgate Lakes Res<span class="el">...</span></div><div class="c all" style="left:195px;width:40px">3.5s<span class="el">...</span></div><div class="c all" style="left:235px;width:75px">Room Only</div><div class="c all" style="left:310px;width:90px">Studio (double)</div><div class="c all" style="left:400px;width:35px">Mon</div><div class="c all" style="left:435px;width:68px">03/07/2017</div><div class="c all" style="left:503px;width:35px">Thu</div><div class="c all" style="left:538px;width:68px">13/07/2017</div><div class="c all" style="left:606px;width:62px">Bonotel</div><div class="c alc" style="left:668px;width:25px"></div><div class="c all" style="left:693px;width:25px"></div><div class="c all" style="left:718px;width:25px"></div><div class="c alr" style="left:743px;width:55px">1,115.85</div><div class="c alr" style="left:798px;width:55px">557.93</div><div class="c alr" style="left:853px;width:65px">1,115.85</div><div class="c alr" style="left:918px;width:55px">0.00</div><div class="c all" style="left:973px;width:25px"></div><div class="c all" style="left:998px;width:60px">XML</div><div class="c all" style="left:1058px;width:75px"></div></div><div class="row" style="top:140px;left:2px;width:1133px"><div class="c all" style="left:0px;width:75px">Orlando (FL)</div><div class="c all" style="left:75px;width:120px">Westgate Lakes Res<span class="el">...</span></div><div class="c all" style="left:195px;width:40px">3.5s<span class="el">...</span></div><div class="c all" style="left:235px;width:75px">Room Only</div><div class="c all" style="left:310px;width:90px">Studio (double <span class="el">...</span></div><div class="c all" style="left:400px;width:35px">Mon</div><div class="c all" style="left:435px;width:68px">03/07/2017</div><div class="c all" style="left:503px;width:35px">Thu</div><div class="c all" style="left:538px;width:68px">13/07/2017</div><div class="c all" style="left:606px;width:62px">Bonotel</div><div class="c alc" style="left:668px;width:25px"></div><div class="c all" style="left:693px;width:25px"></div><div class="c all" style="left:718px;width:25px"></div><div class="c alr" style="left:743px;width:55px">1,115.85</div><div class="c alr" style="left:798px;width:55px">557.93</div><div class="c alr" style="left:853px;width:65px">1,115.85</div><div class="c alr" style="left:918px;width:55px">0.00</div><div class="c all" style="left:973px;width:25px"></div><div class="c all" style="left:998px;width:60px">XML</div><div class="c all" style="left:1058px;width:75px"></div></div><div class="row" style="top:155px;left:2px;width:1133px"><div class="c all" style="left:0px;width:75px">Orlando Int<span class="el">...</span></div><div class="c all" style="left:75px;width:120px">Westgate Lakes Res<span class="el">...</span></div><div class="c all" style="left:195px;width:40px">3.0</div><div class="c all" style="left:235px;width:75px">Room Only</div><div class="c all" style="left:310px;width:90px">1 Bedroom Apt<span class="el">...</span></div><div class="c all" style="left:400px;width:35px">Mon</div><div class="c all" style="left:435px;width:68px">03/07/2017</div><div class="c all" style="left:503px;width:35px">Thu</div><div class="c all" style="left:538px;width:68px">13/07/2017</div><div class="c all" style="left:606px;width:62px">Get A Bed</div><div class="c alc" style="left:668px;width:25px"><span class="ast">*</span></div><div class="c all" style="left:693px;width:25px"></div><div class="c all" style="left:718px;width:25px"></div><div class="c alr" style="left:743px;width:55px">1,121.56</div><div class="c alr" style="left:798px;width:55px">560.78</div><div class="c alr" style="left:853px;width:65px">1,121.56</div><div class="c alr" style="left:918px;width:55px">0.00</div><div class="c all" style="left:973px;width:25px"></div><div class="c all" style="left:998px;width:60px">XML</div><div class="c all" style="left:1058px;width:75px"></div></div><div class="row" style="top:170px;left:2px;width:1133px"><div class="c all" style="left:0px;width:75px">Kissimmee</div><div class="c all" style="left:75px;width:120px">Westgate Towers</div><div class="c all" style="left:195px;width:40px">3.0</div><div class="c all" style="left:235px;width:75px">Room Only</div><div class="c all" style="left:310px;width:90px">1 Bedroom Suite</div><div class="c all" style="left:400px;width:35px">Mon</div><div class="c all" style="left:435px;width:68px">03/07/2017</div><div class="c all" style="left:503px;width:35px">Thu</div><div class="c all" style="left:538px;width:68px">13/07/2017</div><div class="c all" style="left:606px;width:62px">Ocean B<span class="el">...</span></div><div class="c alc" style="left:668px;width:25px"></div><div class="c all" style="left:693px;width:25px"></div><div class="c all" style="left:718px;width:25px"></div><div class="c alr" style="left:743px;width:55px">1,131.36</div><div class="c alr" style="left:798px;width:55px">565.68</div><div class="c alr" style="left:853px;width:65px">1,131.36</div><div class="c alr" style="left:918px;width:55px">0.00</div><div class="c all" style="left:973px;width:25px"></div><div class="c all" style="left:998px;width:60px">XML</div><div class="c all" style="left:1058px;width:75px"></div></div><div class="row" style="top:185px;left:2px;width:1133px"><div class="c all" style="left:0px;width:75px">Internation<span class="el">...</span></div><div class="c all" style="left:75px;width:120px">Westgate Leisure Re<span class="el">...</span></div><div class="c all" style="left:195px;width:40px">3.0</div><div class="c all" style="left:235px;width:75px">Room Only</div><div class="c all" style="left:310px;width:90px">2 Bedroom</div><div class="c all" style="left:400px;width:35px">Mon</div><div class="c all" style="left:435px;width:68px">03/07/2017</div><div class="c all" style="left:503px;width:35px">Thu</div><div class="c all" style="left:538px;width:68px">13/07/2017</div><div class="c all" style="left:606px;width:62px">Ocean B<span class="el">...</span></div><div class="c alc" style="left:668px;width:25px"></div><div class="c all" style="left:693px;width:25px"></div><div class="c all" style="left:718px;width:25px"></div><div class="c alr" style="left:743px;width:55px">1,138.14</div><div class="c alr" style="left:798px;width:55px">569.07</div><div class="c alr" style="left:853px;width:65px">1,138.14</div><div class="c alr" style="left:918px;width:55px">0.00</div><div class="c all" style="left:973px;width:25px"></div><div class="c all" style="left:998px;width:60px">XML</div><div class="c all" style="left:1058px;width:75px"></div></div><div class="row" style="top:200px;left:2px;width:1133px"><div class="c all" style="left:0px;width:75px">Orlando Int<span class="el">...</span></div><div class="c all" style="left:75px;width:120px">Westgate Lakes Res<span class="el">...</span></div><div class="c all" style="left:195px;width:40px">3.0</div><div class="c all" style="left:235px;width:75px">Room Only</div><div class="c all" style="left:310px;width:90px">1 Bedroom Suit<span class="el">...</span></div><div class="c all" style="left:400px;width:35px">Mon</div><div class="c all" style="left:435px;width:68px">03/07/2017</div><div class="c all" style="left:503px;width:35px">Thu</div><div class="c all" style="left:538px;width:68px">13/07/2017</div><div class="c all" style="left:606px;width:62px">Get A Bed</div><div class="c alc" style="left:668px;width:25px"><span class="ast">*</span></div><div class="c all" style="left:693px;width:25px"></div><div class="c all" style="left:718px;width:25px"></div><div class="c alr" style="left:743px;width:55px">1,144.52</div><div class="c alr" style="left:798px;width:55px">572.26</div><div class="c alr" style="left:853px;width:65px">1,144.52</div><div class="c alr" style="left:918px;width:55px">0.00</div><div class="c all" style="left:973px;width:25px"></div><div class="c all" style="left:998px;width:60px">XML</div><div class="c all" style="left:1058px;width:75px"></div></div><div class="row" style="top:215px;left:2px;width:1133px"><div class="c all" style="left:0px;width:75px">Lake Buena<span class="el">...</span></div><div class="c all" style="left:75px;width:120px">Westgate Lakes and <span class="el">...</span></div><div class="c all" style="left:195px;width:40px">3.5</div><div class="c all" style="left:235px;width:75px">Room Only</div><div class="c all" style="left:310px;width:90px">1 Bedroom Villa</div><div class="c all" style="left:400px;width:35px">Mon</div><div class="c all" style="left:435px;width:68px">03/07/2017</div><div class="c all" style="left:503px;width:35px">Thu</div><div class="c all" style="left:538px;width:68px">13/07/2017</div><div class="c all" style="left:606px;width:62px">Ocean B<span class="el">...</span></div><div class="c alc" style="left:668px;width:25px"></div><div class="c all" style="left:693px;width:25px"></div><div class="c all" style="left:718px;width:25px"></div><div class="c alr" style="left:743px;width:55px">1,195.76</div><div class="c alr" style="left:798px;width:55px">597.88</div><div class="c alr" style="left:853px;width:65px">1,195.76</div><div class="c alr" style="left:918px;width:55px">0.00</div><div class="c all" style="left:973px;width:25px"></div><div class="c all" style="left:998px;width:60px">XML</div><div class="c all" style="left:1058px;width:75px"></div></div><div class="row sel" style="top:230px;left:2px;width:1133px"><div class="c all" style="left:0px;width:75px">Internation<span class="el">...</span></div><div class="c all" style="left:75px;width:120px">Westgate Palace</div><div class="c all" style="left:195px;width:40px">3.0</div><div class="c all" style="left:235px;width:75px">Room Only</div><div class="c all" style="left:310px;width:90px">2 Bedroom Del<span class="el">...</span></div><div class="c all" style="left:400px;width:35px">Mon</div><div class="c all" style="left:435px;width:68px">03/07/2017</div><div class="c all" style="left:503px;width:35px">Thu</div><div class="c all" style="left:538px;width:68px">13/07/2017</div><div class="c all" style="left:606px;width:62px">Ocean B<span class="el">...</span></div><div class="c alc" style="left:668px;width:25px"></div><div class="c all" style="left:693px;width:25px"></div><div class="c all" style="left:718px;width:25px"></div><div class="c alr" style="left:743px;width:55px">1,224.58</div><div class="c alr" style="left:798px;width:55px">612.29</div><div class="c alr" style="left:853px;width:65px">1,224.58</div><div class="c alr" style="left:918px;width:55px">0.00</div><div class="c all" style="left:973px;width:25px"></div><div class="c all" style="left:998px;width:60px">XML</div><div class="c all" style="left:1058px;width:75px"></div></div><div class="row" style="top:245px;left:2px;width:1133px"><div class="c all" style="left:0px;width:75px">Sea World</div><div class="c all" style="left:75px;width:120px">Westgate Leisure</div><div class="c all" style="left:195px;width:40px">3*</div><div class="c all" style="left:235px;width:75px">Roomonly</div><div class="c all" style="left:310px;width:90px">Standard, 2 Be<span class="el">...</span></div><div class="c all" style="left:400px;width:35px">Mon</div><div class="c all" style="left:435px;width:68px">03/07/2017</div><div class="c all" style="left:503px;width:35px">Thu</div><div class="c all" style="left:538px;width:68px">13/07/2017</div><div class="c all" style="left:606px;width:62px">Tourico <span class="el">...</span></div><div class="c alc" style="left:668px;width:25px"><span class="ast">*</span></div><div class="c all" style="left:693px;width:25px"></div><div class="c all" style="left:718px;width:25px"></div><div class="c alr" style="left:743px;width:55px">1,250.39</div><div class="c alr" style="left:798px;width:55px">625.20</div><div class="c alr" style="left:853px;width:65px">1,250.39</div><div class="c alr" style="left:918px;width:55px">0.00</div><div class="c all" style="left:973px;width:25px"></div><div class="c all" style="left:998px;width:60px">XML</div><div class="c all" style="left:1058px;width:75px"></div></div><div class="row" style="top:260px;left:2px;width:1133px"><div class="c all" style="left:0px;width:75px">Kissimmee</div><div class="c all" style="left:75px;width:120px">Westgate Towers</div><div class="c all" style="left:195px;width:40px">4*</div><div class="c all" style="left:235px;width:75px">Roomonly</div><div class="c all" style="left:310px;width:90px">Standard, Leis<span class="el">...</span></div><div class="c all" style="left:400px;width:35px">Mon</div><div class="c all" style="left:435px;width:68px">03/07/2017</div><div class="c all" style="left:503px;width:35px">Thu</div><div class="c all" style="left:538px;width:68px">13/07/2017</div><div class="c all" style="left:606px;width:62px">Tourico <span class="el">...</span></div><div class="c alc" style="left:668px;width:25px"><span class="ast">*</span></div><div class="c all" style="left:693px;width:25px"></div><div class="c all" style="left:718px;width:25px"></div><div class="c alr" style="left:743px;width:55px">1,253.26</div><div class="c alr" style="left:798px;width:55px">626.63</div><div class="c alr" style="left:853px;width:65px">1,253.26</div><div class="c alr" style="left:918px;width:55px">0.00</div><div class="c all" style="left:973px;width:25px"></div><div class="c all" style="left:998px;width:60px">XML</div><div class="c all" style="left:1058px;width:75px"></div></div><div class="row" style="top:275px;left:2px;width:1133px"><div class="c all" style="left:0px;width:75px">Lake Buena<span class="el">...</span></div><div class="c all" style="left:75px;width:120px">Westgate Leisure Re<span class="el">...</span></div><div class="c all" style="left:195px;width:40px">4.0</div><div class="c all" style="left:235px;width:75px">Room Only</div><div class="c all" style="left:310px;width:90px">2 Bedrooms Ap<span class="el">...</span></div><div class="c all" style="left:400px;width:35px">Mon</div><div class="c all" style="left:435px;width:68px">03/07/2017</div><div class="c all" style="left:503px;width:35px">Thu</div><div class="c all" style="left:538px;width:68px">13/07/2017</div><div class="c all" style="left:606px;width:62px">Get A Bed</div><div class="c alc" style="left:668px;width:25px"></div><div class="c all" style="left:693px;width:25px"></div><div class="c all" style="left:718px;width:25px"></div><div class="c alr" style="left:743px;width:55px">1,255.79</div><div class="c alr" style="left:798px;width:55px">627.90</div><div class="c alr" style="left:853px;width:65px">1,255.79</div><div class="c alr" style="left:918px;width:55px">0.00</div><div class="c all" style="left:973px;width:25px"></div><div class="c all" style="left:998px;width:60px">XML</div><div class="c all" style="left:1058px;width:75px"></div></div><div class="row" style="top:290px;left:2px;width:1133px"><div class="c all" style="left:0px;width:75px">Kissimmee</div><div class="c all" style="left:75px;width:120px">Westgate Towers</div><div class="c all" style="left:195px;width:40px">4*</div><div class="c all" style="left:235px;width:75px">Roomonly</div><div class="c all" style="left:310px;width:90px">Standard, 1 Be<span class="el">...</span></div><div class="c all" style="left:400px;width:35px">Mon</div><div class="c all" style="left:435px;width:68px">03/07/2017</div><div class="c all" style="left:503px;width:35px">Thu</div><div class="c all" style="left:538px;width:68px">13/07/2017</div><div class="c all" style="left:606px;width:62px">Tourico <span class="el">...</span></div><div class="c alc" style="left:668px;width:25px"><span class="ast">*</span></div><div class="c all" style="left:693px;width:25px"></div><div class="c all" style="left:718px;width:25px"></div><div class="c alr" style="left:743px;width:55px">1,261.51</div><div class="c alr" style="left:798px;width:55px">630.76</div><div class="c alr" style="left:853px;width:65px">1,261.51</div><div class="c alr" style="left:918px;width:55px">0.00</div><div class="c all" style="left:973px;width:25px"></div><div class="c all" style="left:998px;width:60px">XML</div><div class="c all" style="left:1058px;width:75px"></div></div><div class="row" style="top:305px;left:2px;width:1133px"><div class="c all" style="left:0px;width:75px">Kissimmee</div><div class="c all" style="left:75px;width:120px">Westgate Towers</div><div class="c all" style="left:195px;width:40px">3.0</div><div class="c all" style="left:235px;width:75px">Room Only</div><div class="c all" style="left:310px;width:90px">One Bedroom</div><div class="c all" style="left:400px;width:35px">Mon</div><div class="c all" style="left:435px;width:68px">03/07/2017</div><div class="c all" style="left:503px;width:35px">Thu</div><div class="c all" style="left:538px;width:68px">13/07/2017</div><div class="c all" style="left:606px;width:62px">Get A Bed</div><div class="c alc" style="left:668px;width:25px"></div><div class="c all" style="left:693px;width:25px"></div><div class="c all" style="left:718px;width:25px"></div><div class="c alr" style="left:743px;width:55px">1,301.99</div><div class="c alr" style="left:798px;width:55px">651.00</div><div class="c alr" style="left:853px;width:65px">1,301.99</div><div class="c alr" style="left:918px;width:55px">0.00</div><div class="c all" style="left:973px;width:25px"></div><div class="c all" style="left:998px;width:60px">XML</div><div class="c all" style="left:1058px;width:75px"></div></div><div class="row" style="top:320px;left:2px;width:1133px"><div class="c all" style="left:0px;width:75px">Orlando Int<span class="el">...</span></div><div class="c all" style="left:75px;width:120px">Westgate Lakes Res<span class="el">...</span></div><div class="c all" style="left:195px;width:40px">3.0</div><div class="c all" style="left:235px;width:75px">Room Only</div><div class="c all" style="left:310px;width:90px">Apto 1 Hab (2 <span class="el">...</span></div><div class="c all" style="left:400px;width:35px">Mon</div><div class="c all" style="left:435px;width:68px">03/07/2017</div><div class="c all" style="left:503px;width:35px">Thu</div><div class="c all" style="left:538px;width:68px">13/07/2017</div><div class="c all" style="left:606px;width:62px">Get A Bed</div><div class="c alc" style="left:668px;width:25px"><span class="ast">*</span></div><div class="c all" style="left:693px;width:25px"></div><div class="c all" style="left:718px;width:25px"></div><div class="c alr" style="left:743px;width:55px">1,318.67</div><div class="c alr" style="left:798px;width:55px">659.34</div><div class="c alr" style="left:853px;width:65px">1,318.67</div><div class="c alr" style="left:918px;width:55px">0.00</div><div class="c all" style="left:973px;width:25px"></div><div class="c all" style="left:998px;width:60px">XML</div><div class="c all" style="left:1058px;width:75px"></div></div><div class="row" style="top:335px;left:2px;width:1133px"><div class="c all" style="left:0px;width:75px">Lake Buena<span class="el">...</span></div><div class="c all" style="left:75px;width:120px">Westgate Leisure Re<span class="el">...</span></div><div class="c all" style="left:195px;width:40px">4.0</div><div class="c all" style="left:235px;width:75px">Room Only</div><div class="c all" style="left:310px;width:90px">Apto 2 Hab (2 <span class="el">...</span></div><div class="c all" style="left:400px;width:35px">Mon</div><div class="c all" style="left:435px;width:68px">03/07/2017</div><div class="c all" style="left:503px;width:35px">Thu</div><div class="c all" style="left:538px;width:68px">13/07/2017</div><div class="c all" style="left:606px;width:62px">Get A Bed</div><div class="c alc" style="left:668px;width:25px"></div><div class="c all" style="left:693px;width:25px"></div><div class="c all" style="left:718px;width:25px"></div><div class="c alr" style="left:743px;width:55px">1,318.67</div><div class="c alr" style="left:798px;width:55px">659.34</div><div class="c alr" style="left:853px;width:65px">1,318.67</div><div class="c alr" style="left:918px;width:55px">0.00</div><div class="c all" style="left:973px;width:25px"></div><div class="c all" style="left:998px;width:60px">XML</div><div class="c all" style="left:1058px;width:75px"></div></div><div class="row" style="top:350px;left:2px;width:1133px"><div class="c all" style="left:0px;width:75px">Sea World</div><div class="c all" style="left:75px;width:120px">Westgate Leisure</div><div class="c all" style="left:195px;width:40px">3*</div><div class="c all" style="left:235px;width:75px">Roomonly</div><div class="c all" style="left:310px;width:90px">Standard, Leis<span class="el">...</span></div><div class="c all" style="left:400px;width:35px">Mon</div><div class="c all" style="left:435px;width:68px">03/07/2017</div><div class="c all" style="left:503px;width:35px">Thu</div><div class="c all" style="left:538px;width:68px">13/07/2017</div><div class="c all" style="left:606px;width:62px">Tourico <span class="el">...</span></div><div class="c alc" style="left:668px;width:25px"><span class="ast">*</span></div><div class="c all" style="left:693px;width:25px"></div><div class="c all" style="left:718px;width:25px"></div><div class="c alr" style="left:743px;width:55px">1,318.79</div><div class="c alr" style="left:798px;width:55px">659.40</div><div class="c alr" style="left:853px;width:65px">1,318.79</div><div class="c alr" style="left:918px;width:55px">0.00</div><div class="c all" style="left:973px;width:25px"></div><div class="c all" style="left:998px;width:60px">XML</div><div class="c all" style="left:1058px;width:75px"></div></div><div class="row" style="top:365px;left:2px;width:1133px"><div class="c all" style="left:0px;width:75px">Kissimmee</div><div class="c all" style="left:75px;width:120px">Westgate Towers</div><div class="c all" style="left:195px;width:40px">3.0</div><div class="c all" style="left:235px;width:75px">Room Only</div><div class="c all" style="left:310px;width:90px">1 Bedroom Suit<span class="el">...</span></div><div class="c all" style="left:400px;width:35px">Mon</div><div class="c all" style="left:435px;width:68px">03/07/2017</div><div class="c all" style="left:503px;width:35px">Thu</div><div class="c all" style="left:538px;width:68px">13/07/2017</div><div class="c all" style="left:606px;width:62px">Ocean B<span class="el">...</span></div><div class="c alc" style="left:668px;width:25px"></div><div class="c all" style="left:693px;width:25px"></div><div class="c all" style="left:718px;width:25px"></div><div class="c alr" style="left:743px;width:55px">1,330.51</div><div class="c alr" style="left:798px;width:55px">665.26</div><div class="c alr" style="left:853px;width:65px">1,330.51</div><div class="c alr" style="left:918px;width:55px">0.00</div><div class="c all" style="left:973px;width:25px"></div><div class="c all" style="left:998px;width:60px">XML</div><div class="c all" style="left:1058px;width:75px"></div></div><div class="row" style="top:380px;left:2px;width:1133px"><div class="c all" style="left:0px;width:75px">Sea World</div><div class="c all" style="left:75px;width:120px">Westgate Lakes Res<span class="el">...</span></div><div class="c all" style="left:195px;width:40px">4*</div><div class="c all" style="left:235px;width:75px">Roomonly</div><div class="c all" style="left:310px;width:90px">Studio, Leisure<span class="el">...</span></div><div class="c all" style="left:400px;width:35px">Mon</div><div class="c all" style="left:435px;width:68px">03/07/2017</div><div class="c all" style="left:503px;width:35px">Thu</div><div class="c all" style="left:538px;width:68px">13/07/2017</div><div class="c all" style="left:606px;width:62px">Tourico <span class="el">...</span></div><div class="c alc" style="left:668px;width:25px"><span class="ast">*</span></div><div class="c all" style="left:693px;width:25px"></div><div class="c all" style="left:718px;width:25px"></div><div class="c alr" style="left:743px;width:55px">1,335.80</div><div class="c alr" style="left:798px;width:55px">667.90</div><div class="c alr" style="left:853px;width:65px">1,335.80</div><div class="c alr" style="left:918px;width:55px">0.00</div><div class="c all" style="left:973px;width:25px"></div><div class="c all" style="left:998px;width:60px">XML</div><div class="c all" style="left:1058px;width:75px"></div></div><div class="row" style="top:395px;left:2px;width:1133px"><div class="c all" style="left:0px;width:75px">Sea World</div><div class="c all" style="left:75px;width:120px">Westgate Lakes Res<span class="el">...</span></div><div class="c all" style="left:195px;width:40px">4*</div><div class="c all" style="left:235px;width:75px">Roomonly</div><div class="c all" style="left:310px;width:90px">Deluxe, 1 Bedr<span class="el">...</span></div><div class="c all" style="left:400px;width:35px">Mon</div><div class="c all" style="left:435px;width:68px">03/07/2017</div><div class="c all" style="left:503px;width:35px">Thu</div><div class="c all" style="left:538px;width:68px">13/07/2017</div><div class="c all" style="left:606px;width:62px">Tourico <span class="el">...</span></div><div class="c alc" style="left:668px;width:25px"><span class="ast">*</span></div><div class="c all" style="left:693px;width:25px"></div><div class="c all" style="left:718px;width:25px"></div><div class="c alr" style="left:743px;width:55px">1,336.35</div><div class="c alr" style="left:798px;width:55px">668.18</div><div class="c alr" style="left:853px;width:65px">1,336.35</div><div class="c alr" style="left:918px;width:55px">0.00</div><div class="c all" style="left:973px;width:25px"></div><div class="c all" style="left:998px;width:60px">XML</div><div class="c all" style="left:1058px;width:75px"></div></div><div class="row" style="top:410px;left:2px;width:1133px"><div class="c all" style="left:0px;width:75px">Internation<span class="el">...</span></div><div class="c all" style="left:75px;width:120px">Westgate Leisure Re<span class="el">...</span></div><div class="c all" style="left:195px;width:40px">3.0</div><div class="c all" style="left:235px;width:75px">Room Only</div><div class="c all" style="left:310px;width:90px"> 2 Bedroom (3 <span class="el">...</span></div><div class="c all" style="left:400px;width:35px">Mon</div><div class="c all" style="left:435px;width:68px">03/07/2017</div><div class="c all" style="left:503px;width:35px">Thu</div><div class="c all" style="left:538px;width:68px">13/07/2017</div><div class="c all" style="left:606px;width:62px">Ocean B<span class="el">...</span></div><div class="c alc" style="left:668px;width:25px"></div><div class="c all" style="left:693px;width:25px"></div><div class="c all" style="left:718px;width:25px"></div><div class="c alr" style="left:743px;width:55px">1,338.98</div><div class="c alr" style="left:798px;width:55px">669.49</div><div class="c alr" style="left:853px;width:65px">1,338.98</div><div class="c alr" style="left:918px;width:55px">0.00</div><div class="c all" style="left:973px;width:25px"></div><div class="c all" style="left:998px;width:60px">XML</div><div class="c all" style="left:1058px;width:75px"></div></div><div class="row" style="top:425px;left:2px;width:1133px"><div class="c all" style="left:0px;width:75px">Universal St<span class="el">...</span></div><div class="c all" style="left:75px;width:120px">Westgate Palace</div><div class="c all" style="left:195px;width:40px">3.5*</div><div class="c all" style="left:235px;width:75px">Roomonly</div><div class="c all" style="left:310px;width:90px">Deluxe, 2 Bedr<span class="el">...</span></div><div class="c all" style="left:400px;width:35px">Mon</div><div class="c all" style="left:435px;width:68px">03/07/2017</div><div class="c all" style="left:503px;width:35px">Thu</div><div class="c all" style="left:538px;width:68px">13/07/2017</div><div class="c all" style="left:606px;width:62px">Tourico <span class="el">...</span></div><div class="c alc" style="left:668px;width:25px"><span class="ast">*</span></div><div class="c all" style="left:693px;width:25px"></div><div class="c all" style="left:718px;width:25px"></div><div class="c alr" style="left:743px;width:55px">1,345.87</div><div class="c alr" style="left:798px;width:55px">672.94</div><div class="c alr" style="left:853px;width:65px">1,345.87</div><div class="c alr" style="left:918px;width:55px">0.00</div><div class="c all" style="left:973px;width:25px"></div><div class="c all" style="left:998px;width:60px">XML</div><div class="c all" style="left:1058px;width:75px"></div></div><div class="row" style="top:440px;left:2px;width:1133px"><div class="c all" style="left:0px;width:75px">Orlando Int<span class="el">...</span></div><div class="c all" style="left:75px;width:120px">Westgate Palace Res<span class="el">...</span></div><div class="c all" style="left:195px;width:40px">3.0</div><div class="c all" style="left:235px;width:75px">Room Only</div><div class="c all" style="left:310px;width:90px">2 Bedroom Del<span class="el">...</span></div><div class="c all" style="left:400px;width:35px">Mon</div><div class="c all" style="left:435px;width:68px">03/07/2017</div><div class="c all" style="left:503px;width:35px">Thu</div><div class="c all" style="left:538px;width:68px">13/07/2017</div><div class="c all" style="left:606px;width:62px">Get A Bed</div><div class="c alc" style="left:668px;width:25px"></div><div class="c all" style="left:693px;width:25px"></div><div class="c all" style="left:718px;width:25px"></div><div class="c alr" style="left:743px;width:55px">1,356.12</div><div class="c alr" style="left:798px;width:55px">678.06</div><div class="c alr" style="left:853px;width:65px">1,356.12</div><div class="c alr" style="left:918px;width:55px">0.00</div><div class="c all" style="left:973px;width:25px"></div><div class="c all" style="left:998px;width:60px">XML</div><div class="c all" style="left:1058px;width:75px"></div></div><div class="row" style="top:455px;left:2px;width:1133px"><div class="c all" style="left:0px;width:75px">Kissimmee</div><div class="c all" style="left:75px;width:120px">Westgate Towers</div><div class="c all" style="left:195px;width:40px">3.0</div><div class="c all" style="left:235px;width:75px">Room Only</div><div class="c all" style="left:310px;width:90px">2 Bedroom Suite</div><div class="c all" style="left:400px;width:35px">Mon</div><div class="c all" style="left:435px;width:68px">03/07/2017</div><div class="c all" style="left:503px;width:35px">Thu</div><div class="c all" style="left:538px;width:68px">13/07/2017</div><div class="c all" style="left:606px;width:62px">Ocean B<span class="el">...</span></div><div class="c alc" style="left:668px;width:25px"></div><div class="c all" style="left:693px;width:25px"></div><div class="c all" style="left:718px;width:25px"></div><div class="c alr" style="left:743px;width:55px">1,383.05</div><div class="c alr" style="left:798px;width:55px">691.53</div><div class="c alr" style="left:853px;width:65px">1,383.05</div><div class="c alr" style="left:918px;width:55px">0.00</div><div class="c all" style="left:973px;width:25px"></div><div class="c all" style="left:998px;width:60px">XML</div><div class="c all" style="left:1058px;width:75px"></div></div><div class="row" style="top:470px;left:2px;width:1133px"><div class="c all" style="left:0px;width:75px">Lake Buena<span class="el">...</span></div><div class="c all" style="left:75px;width:120px">Westgate Lakes and <span class="el">...</span></div><div class="c all" style="left:195px;width:40px">3.5</div><div class="c all" style="left:235px;width:75px">Room Only</div><div class="c all" style="left:310px;width:90px">1 Bedroom Villa<span class="el">...</span></div><div class="c all" style="left:400px;width:35px">Mon</div><div class="c all" style="left:435px;width:68px">03/07/2017</div><div class="c all" style="left:503px;width:35px">Thu</div><div class="c all" style="left:538px;width:68px">13/07/2017</div><div class="c all" style="left:606px;width:62px">Ocean B<span class="el">...</span></div><div class="c alc" style="left:668px;width:25px"></div><div class="c all" style="left:693px;width:25px"></div><div class="c all" style="left:718px;width:25px"></div><div class="c alr" style="left:743px;width:55px">1,406.78</div><div class="c alr" style="left:798px;width:55px">703.39</div><div class="c alr" style="left:853px;width:65px">1,406.78</div><div class="c alr" style="left:918px;width:55px">0.00</div><div class="c all" style="left:973px;width:25px"></div><div class="c all" style="left:998px;width:60px">XML</div><div class="c all" style="left:1058px;width:75px"></div></div><div class="row" style="top:485px;left:2px;width:1133px"><div class="c all" style="left:0px;width:75px">Orlando Int<span class="el">...</span></div><div class="c all" style="left:75px;width:120px">Westgate Palace Res<span class="el">...</span></div><div class="c all" style="left:195px;width:40px">3.0</div><div class="c all" style="left:235px;width:75px">Room Only</div><div class="c all" style="left:310px;width:90px">Apto 2 Hab (2 <span class="el">...</span></div><div class="c all" style="left:400px;width:35px">Mon</div><div class="c all" style="left:435px;width:68px">03/07/2017</div><div class="c all" style="left:503px;width:35px">Thu</div><div class="c all" style="left:538px;width:68px">13/07/2017</div><div class="c all" style="left:606px;width:62px">Get A Bed</div><div class="c alc" style="left:668px;width:25px"></div><div class="c all" style="left:693px;width:25px"></div><div class="c all" style="left:718px;width:25px"></div><div class="c alr" style="left:743px;width:55px">1,424.08</div><div class="c alr" style="left:798px;width:55px">712.04</div><div class="c alr" style="left:853px;width:65px">1,424.08</div><div class="c alr" style="left:918px;width:55px">0.00</div><div class="c all" style="left:973px;width:25px"></div><div class="c all" style="left:998px;width:60px">XML</div><div class="c all" style="left:1058px;width:75px"></div></div><div class="row" style="top:500px;left:2px;width:1133px"><div class="c all" style="left:0px;width:75px">Internation<span class="el">...</span></div><div class="c all" style="left:75px;width:120px">Westgate Palace</div><div class="c all" style="left:195px;width:40px">3.0</div><div class="c all" style="left:235px;width:75px">Room Only</div><div class="c all" style="left:310px;width:90px">2 Bedroom Del<span class="el">...</span></div><div class="c all" style="left:400px;width:35px">Mon</div><div class="c all" style="left:435px;width:68px">03/07/2017</div><div class="c all" style="left:503px;width:35px">Thu</div><div class="c all" style="left:538px;width:68px">13/07/2017</div><div class="c all" style="left:606px;width:62px">Ocean B<span class="el">...</span></div><div class="c alc" style="left:668px;width:25px"></div><div class="c all" style="left:693px;width:25px"></div><div class="c all" style="left:718px;width:25px"></div><div class="c alr" style="left:743px;width:55px">1,440.68</div><div class="c alr" style="left:798px;width:55px">720.34</div><div class="c alr" style="left:853px;width:65px">1,440.68</div><div class="c alr" style="left:918px;width:55px">0.00</div><div class="c all" style="left:973px;width:25px"></div><div class="c all" style="left:998px;width:60px">XML</div><div class="c all" style="left:1058px;width:75px"></div></div><div class="row" style="top:515px;left:2px;width:1133px"><div class="c all" style="left:0px;width:75px">Lake Buena<span class="el">...</span></div><div class="c all" style="left:75px;width:120px">Westgate Lakes and <span class="el">...</span></div><div class="c all" style="left:195px;width:40px">3.5</div><div class="c all" style="left:235px;width:75px">Room Only</div><div class="c all" style="left:310px;width:90px">2 Bedroom Villa</div><div class="c all" style="left:400px;width:35px">Mon</div><div class="c all" style="left:435px;width:68px">03/07/2017</div><div class="c all" style="left:503px;width:35px">Thu</div><div class="c all" style="left:538px;width:68px">13/07/2017</div><div class="c all" style="left:606px;width:62px">Ocean B<span class="el">...</span></div><div class="c alc" style="left:668px;width:25px"></div><div class="c all" style="left:693px;width:25px"></div><div class="c all" style="left:718px;width:25px"></div><div class="c alr" style="left:743px;width:55px">1,455.08</div><div class="c alr" style="left:798px;width:55px">727.54</div><div class="c alr" style="left:853px;width:65px">1,455.08</div><div class="c alr" style="left:918px;width:55px">0.00</div><div class="c all" style="left:973px;width:25px"></div><div class="c all" style="left:998px;width:60px">XML</div><div class="c all" style="left:1058px;width:75px"></div></div><div class="row" style="top:530px;left:2px;width:1133px"><div class="c all" style="left:0px;width:75px">Orlando (FL)</div><div class="c all" style="left:75px;width:120px">Westgate Palace</div><div class="c all" style="left:195px;width:40px">3star</div><div class="c all" style="left:235px;width:75px">Room Only</div><div class="c all" style="left:310px;width:90px">Two Bedroom <span class="el">...</span></div><div class="c all" style="left:400px;width:35px">Mon</div><div class="c all" style="left:435px;width:68px">03/07/2017</div><div class="c all" style="left:503px;width:35px">Thu</div><div class="c all" style="left:538px;width:68px">13/07/2017</div><div class="c all" style="left:606px;width:62px">Bonotel</div><div class="c alc" style="left:668px;width:25px"></div><div class="c all" style="left:693px;width:25px"></div><div class="c all" style="left:718px;width:25px"></div><div class="c alr" style="left:743px;width:55px">1,530.06</div><div class="c alr" style="left:798px;width:55px">765.03</div><div class="c alr" style="left:853px;width:65px">1,530.06</div><div class="c alr" style="left:918px;width:55px">0.00</div><div class="c all" style="left:973px;width:25px"></div><div class="c all" style="left:998px;width:60px">XML</div><div class="c all" style="left:1058px;width:75px"></div></div><div class="row" style="top:545px;left:2px;width:1133px"><div class="c all" style="left:0px;width:75px">Orlando (FL)</div><div class="c all" style="left:75px;width:120px">Westgate Palace</div><div class="c all" style="left:195px;width:40px">3star</div><div class="c all" style="left:235px;width:75px">Room Only</div><div class="c all" style="left:310px;width:90px">Two Bedroom <span class="el">...</span></div><div class="c all" style="left:400px;width:35px">Mon</div><div class="c all" style="left:435px;width:68px">03/07/2017</div><div class="c all" style="left:503px;width:35px">Thu</div><div class="c all" style="left:538px;width:68px">13/07/2017</div><div class="c all" style="left:606px;width:62px">Bonotel</div><div class="c alc" style="left:668px;width:25px"></div><div class="c all" style="left:693px;width:25px"></div><div class="c all" style="left:718px;width:25px"></div><div class="c alr" style="left:743px;width:55px">1,530.06</div><div class="c alr" style="left:798px;width:55px">765.03</div><div class="c alr" style="left:853px;width:65px">1,530.06</div><div class="c alr" style="left:918px;width:55px">0.00</div><div class="c all" style="left:973px;width:25px"></div><div class="c all" style="left:998px;width:60px">XML</div><div class="c all" style="left:1058px;width:75px"></div></div><div class="row" style="top:560px;left:2px;width:1133px"><div class="c all" style="left:0px;width:75px">Kissimmee</div><div class="c all" style="left:75px;width:120px">Westgate Towers</div><div class="c all" style="left:195px;width:40px">4*</div><div class="c all" style="left:235px;width:75px">Roomonly</div><div class="c all" style="left:310px;width:90px">Standard, 2 Be<span class="el">...</span></div><div class="c all" style="left:400px;width:35px">Mon</div><div class="c all" style="left:435px;width:68px">03/07/2017</div><div class="c all" style="left:503px;width:35px">Thu</div><div class="c all" style="left:538px;width:68px">13/07/2017</div><div class="c all" style="left:606px;width:62px">Tourico <span class="el">...</span></div><div class="c alc" style="left:668px;width:25px"><span class="ast">*</span></div><div class="c all" style="left:693px;width:25px"></div><div class="c all" style="left:718px;width:25px"></div><div class="c alr" style="left:743px;width:55px">1,550.44</div><div class="c alr" style="left:798px;width:55px">775.22</div><div class="c alr" style="left:853px;width:65px">1,550.44</div><div class="c alr" style="left:918px;width:55px">0.00</div><div class="c all" style="left:973px;width:25px"></div><div class="c all" style="left:998px;width:60px">XML</div><div class="c all" style="left:1058px;width:75px"></div></div><div class="row" style="top:575px;left:2px;width:1133px"><div class="c all" style="left:0px;width:75px">Kissimmee</div><div class="c all" style="left:75px;width:120px">Westgate Towers</div><div class="c all" style="left:195px;width:40px">3.0</div><div class="c all" style="left:235px;width:75px">Room Only</div><div class="c all" style="left:310px;width:90px">Two Bedroom <span class="el">...</span></div><div class="c all" style="left:400px;width:35px">Mon</div><div class="c all" style="left:435px;width:68px">03/07/2017</div><div class="c all" style="left:503px;width:35px">Thu</div><div class="c all" style="left:538px;width:68px">13/07/2017</div><div class="c all" style="left:606px;width:62px">Get A Bed</div><div class="c alc" style="left:668px;width:25px"></div><div class="c all" style="left:693px;width:25px"></div><div class="c all" style="left:718px;width:25px"></div><div class="c alr" style="left:743px;width:55px">1,603.16</div><div class="c alr" style="left:798px;width:55px">801.58</div><div class="c alr" style="left:853px;width:65px">1,603.16</div><div class="c alr" style="left:918px;width:55px">0.00</div><div class="c all" style="left:973px;width:25px"></div><div class="c all" style="left:998px;width:60px">XML</div><div class="c all" style="left:1058px;width:75px"></div></div><div class="sbtrack" style="left:1355px;top:1px;width:16px;height:900px"></div><div class="sbbtn" style="left:1355px;top:1px;width:16px;height:16px"><svg width="7" height="4" style="left:3px;top:4px"><path d="M3.5 0 L7 4 L0 4Z" fill="#000"/></svg></div><div class="sbbtn" style="left:1355px;top:17px;width:16px;height:439px"></div></div></div><div class="win" style="top:0px;height:169px"><div class="title"><svg class="ic" style="left:2px;top:1px" width="16" height="16" viewBox="0 0 16 16"><defs><radialGradient id="apg" cx="0.3" cy="0.25" r="0.85"><stop offset="0" stop-color="#fff070"/><stop offset="0.4" stop-color="#f0a818"/><stop offset="0.75" stop-color="#c85010"/><stop offset="1" stop-color="#b03808"/></radialGradient></defs><rect x="0" y="0" width="16" height="16" fill="#fff"/><path d="M1 7.5 L3.5 3 L14.5 6.2 L8 13 Z" fill="url(#apg)"/></svg><span class="ttxt">Interactive - Ocean-Florida (code: x5kGz4S9yR)</span><div class="tb" style="left:1548px"><div class="tbmin"></div></div><div class="tb" style="left:1564px"><svg width="16" height="14" style="position:absolute;left:0;top:0"><rect x="6.5" y="2.5" width="6" height="5" fill="none" stroke="#000"/><rect x="6" y="2" width="7" height="2" fill="#000"/><rect x="3.5" y="5.5" width="6" height="5" fill="#d4d0c8" stroke="#000"/><rect x="3" y="5" width="7" height="2" fill="#000"/></svg></div><div class="tb" style="left:1582px"><svg width="16" height="14" style="position:absolute;left:0;top:0"><path d="M4.5 3.5 L11.5 10.5 M11.5 3.5 L4.5 10.5" stroke="#000" stroke-width="1.6"/></svg></div></div><div class="tline"></div><div class="menu"><span style="left:6px">Options</span><span style="left:55px">Logs</span><span style="left:88px">Help</span></div><div class="lpanel" style="left:4px;top:42px;width:205px;height:391px"><div class="lphead"><span class="lptitle">Interactive</span></div><svg class="ic" style="left:185px;top:5px" width="14" height="14" viewBox="0 0 14 14"><rect x="0.5" y="0.5" width="9" height="9" fill="#e8f0ff" stroke="#a8b8d0"/><rect x="3.5" y="3.5" width="9" height="9" fill="#f0f8ff" stroke="#8090b0"/><rect x="5" y="7.5" width="6" height="1.5" fill="#103070"/></svg><div class="lptree"><div class="tsel" style="top:1px"></div><svg class="ic" style="left:25px;top:1px" width="16" height="16" viewBox="0 0 16 16"><path d="M0.5 6.5 C1.5 2.5 5 0.5 8 1.2 C11 0.3 14.5 2 15.8 6.8 C14.5 6 13.5 5.8 12.5 6 C13.3 7.5 13.3 9 12.8 10 C11.8 8.3 10.5 7.2 9 6.8 L7.5 6.8 C6.5 7.3 5.5 8.3 4.5 10 C4 9 4 7.5 5 6.2 C3.8 5.8 2.5 5.8 0.5 6.5Z" fill="#7ed020"/><path d="M3 4 C5 3 7 3 8 4 C9 3 12 3 13 4.5 C11 4 9.5 4.5 8.5 5.5 C7 4.5 5 4 3 4Z" fill="#a8e040"/><path d="M6 6.5 C5.5 7.5 5 8.5 4.8 9.5 M10.5 7 C11.5 8 12 9 12.3 9.8" stroke="#50a810" stroke-width="0.8" fill="none"/><path d="M7.8 5 C8.5 8 9.8 10.5 10 14" stroke="#f0b020" stroke-width="2" fill="none"/><path d="M9 8 L10 8.5 M9.5 11 L10.5 11.5" stroke="#b05010" stroke-width="1"/><ellipse cx="8.5" cy="14.3" rx="7" ry="1.9" fill="#ffd800"/><path d="M3 15 L14 15 L12.5 16.3 L5 16.3Z" fill="#f0c000"/><path d="M10 13.2 L13 13.5" stroke="#604010" stroke-width="0.8"/></svg><span class="titem" style="top:2px">New Booking</span><svg class="ic" style="left:25px;top:18px" width="16" height="16" viewBox="0 0 16 16"><path d="M0.5 6.5 C1.5 2.5 5 0.5 8 1.2 C11 0.3 14.5 2 15.8 6.8 C14.5 6 13.5 5.8 12.5 6 C13.3 7.5 13.3 9 12.8 10 C11.8 8.3 10.5 7.2 9 6.8 L7.5 6.8 C6.5 7.3 5.5 8.3 4.5 10 C4 9 4 7.5 5 6.2 C3.8 5.8 2.5 5.8 0.5 6.5Z" fill="#7ed020"/><path d="M3 4 C5 3 7 3 8 4 C9 3 12 3 13 4.5 C11 4 9.5 4.5 8.5 5.5 C7 4.5 5 4 3 4Z" fill="#a8e040"/><path d="M6 6.5 C5.5 7.5 5 8.5 4.8 9.5 M10.5 7 C11.5 8 12 9 12.3 9.8" stroke="#50a810" stroke-width="0.8" fill="none"/><path d="M7.8 5 C8.5 8 9.8 10.5 10 12" stroke="#f0b020" stroke-width="2" fill="none"/><rect x="1.5" y="10.5" width="10" height="6" fill="#f0f0e0" stroke="#707060" stroke-width="1"/><rect x="1" y="10" width="11" height="1.2" fill="#505040"/><circle cx="6.5" cy="13.5" r="1.8" fill="#706060"/><path d="M12 12.5 L15 12.5 L15.5 15.5 L12 16Z" fill="#ffd000"/></svg><span class="titem" style="top:19px">Completed Bookings</span><svg class="ic" style="left:25px;top:35px" width="16" height="16" viewBox="0 0 16 16"><circle cx="7.5" cy="7.5" r="6.8" fill="#fff" stroke="#1898f0" stroke-width="2.2"/><path d="M7.5 3.5 L7.5 7.5 L10 5.5" stroke="#303030" stroke-width="1" fill="none"/><circle cx="3.5" cy="7.5" r="0.6" fill="#303030"/><circle cx="11.5" cy="7.5" r="0.6" fill="#303030"/><circle cx="7.5" cy="3" r="0.5" fill="#303030"/><path d="M4 12.5 C7 14 11 13 13.5 9 L15 5.5 L15.5 10 C14 14 10 15.8 7 14.5 L6 16.5Z" fill="#58c018"/><path d="M6.5 12 L10.5 11 L9 14.5Z" fill="#80d838"/></svg><span class="titem" style="top:36px">Quick Quotes</span><div class="exp" style="top:56px"></div><svg class="ic" style="left:25px;top:52px" width="16" height="16" viewBox="0 0 16 16"><path d="M6 1 L9 0.5 L10 2.5 L8 3.5Z" fill="#f8c830"/><path d="M6.5 3 L9.5 3 L11 8 L8 9.5 L6.5 8Z" fill="#4060b0"/><path d="M9 4 L11.5 5 L12 9 L9.5 9Z" fill="#f0c030"/><path d="M10 7 L13 8.5 L11 10Z" fill="#50a030"/><path d="M6.5 5.5 L3.5 6.5" stroke="#f8c030" stroke-width="1.3"/><path d="M7.5 9 L5.5 12 L5 15" stroke="#102080" stroke-width="2" fill="none"/><path d="M8.5 9.5 L11 11.5 L15.5 11.5" stroke="#102080" stroke-width="1.8" fill="none"/></svg><span class="titem" style="top:53px">Administrator</span><svg class="ic" style="left:25px;top:69px" width="16" height="16" viewBox="0 0 16 16"><circle cx="7.5" cy="2.5" r="2.2" fill="#f8b010"/><ellipse cx="7.5" cy="2.3" rx="1" ry="0.6" fill="#ff6010"/><path d="M2.5 8 C2.5 5.5 4.5 4.5 7.5 4.5 C10.5 4.5 12.5 5.5 12.5 8 L12 15 L3 15Z" fill="#f83808"/><path d="M2.5 7 C0.5 8 0.5 11 2.5 13 L4 12 L3.5 8Z" fill="#ffd020"/><path d="M12.5 7 C14.5 8 14.5 11 12.5 13 L11 12 L11.5 8Z" fill="#ffd020"/><rect x="6.5" y="8" width="3" height="2.5" fill="#20d040"/><rect x="4.5" y="13" width="6" height="2.5" fill="#20d0e0"/><path d="M6 5 L7.5 7 L9 5" stroke="#ffb020" stroke-width="0.8" fill="none"/></svg><span class="titem" style="top:70px">Direct Clients</span><div class="exp" style="top:90px"></div><svg class="ic" style="left:25px;top:86px" width="16" height="16" viewBox="0 0 16 16"><defs><linearGradient id="pyg" x1="0" y1="0" x2="1" y2="1"><stop offset="0" stop-color="#40b0f8"/><stop offset="1" stop-color="#1060c0"/></linearGradient></defs><rect x="0" y="1" width="14" height="10" rx="1" fill="url(#pyg)"/><rect x="0" y="3" width="14" height="1.8" fill="#0c3870"/><path d="M12 5 C9 5 8.5 8.5 11 9 C13 9.5 13 11.5 10.5 11.5 C9 11.5 8 11 8 11 L8.5 13 C9.5 13.5 13 13.5 14 11.5 C15 9 12 8 11 7.5 C10 7 10.5 6 12 6.2 L13.5 6.8 L14 5.2Z" fill="#90d020" stroke="#508010" stroke-width="0.6"/><path d="M11 3.5 L11 15.5" stroke="#80c020" stroke-width="1.2"/></svg><span class="titem" style="top:87px">Payments</span><div class="exp" style="top:107px"></div><svg class="ic" style="left:25px;top:103px" width="16" height="16" viewBox="0 0 16 16"><rect x="0.5" y="0.5" width="9" height="12" fill="#f8f8f8" stroke="#507090"/><rect x="4.5" y="3.5" width="10" height="12" fill="#fff" stroke="#507090"/><circle cx="9.5" cy="8" r="3.3" fill="#20b030"/><rect x="9" y="5.5" width="1" height="3" fill="#fff"/><rect x="9" y="9.3" width="1" height="1" fill="#fff"/><rect x="6.5" y="12.5" width="6" height="1" fill="#703020"/><path d="M2 5 C2 3 4 3 4.5 4" stroke="#20b030" stroke-width="1.2" fill="none"/></svg><span class="titem" style="top:104px">Reporting and Analytics</span><svg class="ic" style="left:25px;top:120px" width="16" height="16" viewBox="0 0 16 16"><path d="M1.5 0.5 L11 0.5 L14.5 4 L14.5 15.5 L1.5 15.5Z" fill="#c8d4f0" stroke="#8090a8"/><path d="M11 0.5 L11 4 L14.5 4" fill="#fff" stroke="#8090a8"/><circle cx="7.5" cy="9" r="4.8" fill="#5040c0"/><circle cx="8" cy="9" r="3.8" fill="#2080e0"/><path d="M5 7 C7 6 9 8 8 10 C10 9 11 10 10 12" stroke="#40e0f0" stroke-width="1.5" fill="none"/></svg><span class="titem" style="top:121px">Viewdata</span><div class="exp" style="top:141px"></div><svg class="ic" style="left:25px;top:137px" width="16" height="16" viewBox="0 0 16 16"><path d="M0.5 8 L7 11.5 L15 8 L15 12 L8 16 L0.5 12Z" fill="#1880e0"/><path d="M0.5 8 L7 11.5 L8 16 L0.5 12Z" fill="#30a8f0"/><path d="M1 3.5 L8 0.5 L15 3 L8 6.5Z" fill="#f8d030"/><path d="M1 3.5 L8 6.5 L15 3 L15 8 L8 11.5 L1 8Z" fill="#f0a018"/><path d="M2 5.5 L8 8.5 L14 5.5 M2 7 L8 10 L14 7" stroke="#f8e060" stroke-width="0.8" fill="none"/></svg><span class="titem" style="top:138px">Maintenance</span></div></div><div class="folder" style="left:212px;top:42px;width:1384px;height:900px"><div class="tabstrip"></div><div class="atab"><span class="atxt">Book. ref.: &lt;none&gt;</span></div><svg class="ic" style="left:3px;top:2px" width="17" height="17" viewBox="0 0 17 17"><path d="M0.5 6.5 C1.5 2.5 5 0.5 8 1.2 C11 0.3 14.5 2 15.8 6.8 C14.5 6 13.5 5.8 12.5 6 C13.3 7.5 13.3 9 12.8 10 C11.8 8.3 10.5 7.2 9 6.8 L7.5 6.8 C6.5 7.3 5.5 8.3 4.5 10 C4 9 4 7.5 5 6.2 C3.8 5.8 2.5 5.8 0.5 6.5Z" fill="#7ed020"/><path d="M3 4 C5 3 7 3 8 4 C9 3 12 3 13 4.5 C11 4 9.5 4.5 8.5 5.5 C7 4.5 5 4 3 4Z" fill="#a8e040"/><path d="M6 6.5 C5.5 7.5 5 8.5 4.8 9.5 M10.5 7 C11.5 8 12 9 12.3 9.8" stroke="#50a810" stroke-width="0.8" fill="none"/><path d="M7.8 5 C8.5 8 9.8 10.5 10 14" stroke="#f0b020" stroke-width="2" fill="none"/><path d="M9 8 L10 8.5 M9.5 11 L10.5 11.5" stroke="#b05010" stroke-width="1"/><ellipse cx="8.5" cy="14.3" rx="7" ry="1.9" fill="#ffd800"/><path d="M3 15 L14 15 L12.5 16.3 L5 16.3Z" fill="#f0c000"/><path d="M10 13.2 L13 13.5" stroke="#604010" stroke-width="0.8"/></svg><svg class="ic" style="left:126px;top:6px" width="10" height="10" viewBox="0 0 10 10"><path d="M1.5 1.5 L8.5 8.5 M8.5 1.5 L1.5 8.5" stroke="#303030" stroke-width="4" stroke-linecap="square"/><path d="M1.5 1.5 L8.5 8.5 M8.5 1.5 L1.5 8.5" stroke="#fff" stroke-width="2.2" stroke-linecap="square"/></svg><div class="itab"><span class="itxt">Direct Clients Search</span></div><svg class="ic" style="left:149px;top:2px" width="16" height="16" viewBox="0 0 16 16"><circle cx="7.5" cy="2.5" r="2.2" fill="#f8b010"/><ellipse cx="7.5" cy="2.3" rx="1" ry="0.6" fill="#ff6010"/><path d="M2.5 8 C2.5 5.5 4.5 4.5 7.5 4.5 C10.5 4.5 12.5 5.5 12.5 8 L12 15 L3 15Z" fill="#f83808"/><path d="M2.5 7 C0.5 8 0.5 11 2.5 13 L4 12 L3.5 8Z" fill="#ffd020"/><path d="M12.5 7 C14.5 8 14.5 11 12.5 13 L11 12 L11.5 8Z" fill="#ffd020"/><rect x="6.5" y="8" width="3" height="2.5" fill="#20d040"/><rect x="4.5" y="13" width="6" height="2.5" fill="#20d0e0"/><path d="M6 5 L7.5 7 L9 5" stroke="#ffb020" stroke-width="0.8" fill="none"/></svg><svg class="ic" style="left:1348px;top:4px" width="10" height="5" viewBox="0 0 10 5"><rect x="0.5" y="0.5" width="9" height="4" fill="#fff" stroke="#404040"/></svg><svg class="ic" style="left:1366px;top:4px" width="10" height="11" viewBox="0 0 10 11"><rect x="0.5" y="0.5" width="9" height="9" fill="#fff" stroke="#404040"/><rect x="0.5" y="0.5" width="9" height="1.5" fill="#404040"/></svg><div class="blueside l"></div><div class="blueside r"></div><div class="hdr"></div><div class="navyline"></div></div><svg class="ic" style="left:228px;top:74px" width="36" height="48" viewBox="0 0 36 48"><defs><linearGradient id="bgr" x1="0" y1="0" x2="1" y2="1"><stop offset="0" stop-color="#b8c8c8"/><stop offset="1" stop-color="#90d8e0"/></linearGradient></defs><path d="M0 8 L24 0.5 L24 45.6 L0 42.7 Z" fill="#e4eaec"/><path d="M24 0.5 L34 4.5 L34 42.7 L24 45.6 Z" fill="url(#bgr)"/><path d="M4 6.5 L18 2 L18 5.5 L4 9.5Z" fill="#30a8f0"/><rect x="1.8" y="11.0" width="2.4" height="1.7" fill="#1890e8"/><rect x="1.8" y="13.9" width="2.4" height="1.7" fill="#1890e8"/><rect x="1.8" y="16.9" width="2.4" height="1.7" fill="#1890e8"/><rect x="1.8" y="19.9" width="2.4" height="1.7" fill="#1890e8"/><rect x="1.8" y="22.8" width="2.4" height="1.7" fill="#1890e8"/><rect x="1.8" y="25.8" width="2.4" height="1.7" fill="#1890e8"/><rect x="1.8" y="28.7" width="2.4" height="1.7" fill="#1890e8"/><rect x="1.8" y="31.7" width="2.4" height="1.7" fill="#1890e8"/><rect x="1.8" y="34.6" width="2.4" height="1.7" fill="#1890e8"/><rect x="1.8" y="37.5" width="2.4" height="1.7" fill="#1890e8"/><rect x="5.0" y="9.8" width="2.4" height="1.7" fill="#1890e8"/><rect x="5.0" y="12.8" width="2.4" height="1.7" fill="#1890e8"/><rect x="5.0" y="15.7" width="2.4" height="1.7" fill="#1890e8"/><rect x="5.0" y="18.7" width="2.4" height="1.7" fill="#1890e8"/><rect x="5.0" y="21.6" width="2.4" height="1.7" fill="#1890e8"/><rect x="5.0" y="24.6" width="2.4" height="1.7" fill="#1890e8"/><rect x="5.0" y="27.5" width="2.4" height="1.7" fill="#1890e8"/><rect x="5.0" y="30.5" width="2.4" height="1.7" fill="#1890e8"/><rect x="5.0" y="33.4" width="2.4" height="1.7" fill="#1890e8"/><rect x="5.0" y="36.4" width="2.4" height="1.7" fill="#1890e8"/><rect x="8.2" y="8.6" width="2.4" height="1.7" fill="#1890e8"/><rect x="8.2" y="11.6" width="2.4" height="1.7" fill="#1890e8"/><rect x="8.2" y="14.5" width="2.4" height="1.7" fill="#1890e8"/><rect x="8.2" y="17.5" width="2.4" height="1.7" fill="#1890e8"/><rect x="8.2" y="20.4" width="2.4" height="1.7" fill="#1890e8"/><rect x="8.2" y="23.4" width="2.4" height="1.7" fill="#1890e8"/><rect x="8.2" y="26.3" width="2.4" height="1.7" fill="#1890e8"/><rect x="8.2" y="29.2" width="2.4" height="1.7" fill="#1890e8"/><rect x="8.2" y="32.2" width="2.4" height="1.7" fill="#1890e8"/><rect x="8.2" y="35.1" width="2.4" height="1.7" fill="#1890e8"/><rect x="8.2" y="38.1" width="2.4" height="1.7" fill="#1890e8"/><rect x="12.0" y="7.4" width="2.4" height="1.7" fill="#1890e8"/><rect x="12.0" y="10.4" width="2.4" height="1.7" fill="#1890e8"/><rect x="12.0" y="13.3" width="2.4" height="1.7" fill="#1890e8"/><rect x="12.0" y="16.2" width="2.4" height="1.7" fill="#1890e8"/><rect x="12.0" y="19.2" width="2.4" height="1.7" fill="#1890e8"/><rect x="12.0" y="22.1" width="2.4" height="1.7" fill="#1890e8"/><rect x="12.0" y="25.1" width="2.4" height="1.7" fill="#1890e8"/><rect x="12.0" y="28.1" width="2.4" height="1.7" fill="#1890e8"/><rect x="12.0" y="31.0" width="2.4" height="1.7" fill="#1890e8"/><rect x="12.0" y="34.0" width="2.4" height="1.7" fill="#1890e8"/><rect x="12.0" y="36.9" width="2.4" height="1.7" fill="#1890e8"/><rect x="12.0" y="39.9" width="2.4" height="1.7" fill="#1890e8"/><rect x="16.2" y="6.2" width="2.4" height="1.7" fill="#1890e8"/><rect x="16.2" y="9.2" width="2.4" height="1.7" fill="#1890e8"/><rect x="16.2" y="12.1" width="2.4" height="1.7" fill="#1890e8"/><rect x="16.2" y="15.1" width="2.4" height="1.7" fill="#1890e8"/><rect x="16.2" y="18.0" width="2.4" height="1.7" fill="#1890e8"/><rect x="16.2" y="20.9" width="2.4" height="1.7" fill="#1890e8"/><rect x="16.2" y="23.9" width="2.4" height="1.7" fill="#1890e8"/><rect x="16.2" y="26.9" width="2.4" height="1.7" fill="#1890e8"/><rect x="16.2" y="29.8" width="2.4" height="1.7" fill="#1890e8"/><rect x="16.2" y="32.8" width="2.4" height="1.7" fill="#1890e8"/><rect x="16.2" y="35.7" width="2.4" height="1.7" fill="#1890e8"/><rect x="16.2" y="38.7" width="2.4" height="1.7" fill="#1890e8"/><rect x="20.6" y="5.0" width="2.4" height="1.7" fill="#1890e8"/><rect x="20.6" y="8.0" width="2.4" height="1.7" fill="#1890e8"/><rect x="20.6" y="10.9" width="2.4" height="1.7" fill="#1890e8"/><rect x="20.6" y="13.9" width="2.4" height="1.7" fill="#1890e8"/><rect x="20.6" y="16.8" width="2.4" height="1.7" fill="#1890e8"/><rect x="20.6" y="19.8" width="2.4" height="1.7" fill="#1890e8"/><rect x="20.6" y="22.7" width="2.4" height="1.7" fill="#1890e8"/><rect x="20.6" y="25.7" width="2.4" height="1.7" fill="#1890e8"/><rect x="20.6" y="28.6" width="2.4" height="1.7" fill="#1890e8"/><rect x="20.6" y="31.6" width="2.4" height="1.7" fill="#1890e8"/><rect x="20.6" y="34.5" width="2.4" height="1.7" fill="#1890e8"/><rect x="20.6" y="37.5" width="2.4" height="1.7" fill="#1890e8"/><rect x="20.6" y="40.4" width="2.4" height="1.7" fill="#1890e8"/><path d="M1.2 10.0 L1.2 43.0" stroke="#c0c8cc" stroke-width="0.5"/><path d="M4.4 8.5 L4.4 43.5" stroke="#c0c8cc" stroke-width="0.5"/><path d="M7.6 7.0 L7.6 44.0" stroke="#c0c8cc" stroke-width="0.5"/><path d="M11.4 5.5 L11.4 44.5" stroke="#c0c8cc" stroke-width="0.5"/><path d="M15.6 4.0 L15.6 45.0" stroke="#c0c8cc" stroke-width="0.5"/><path d="M20.0 2.5 L20.0 45.5" stroke="#c0c8cc" stroke-width="0.5"/><path d="M6 39 L12 38.5 L11 41 L7 41Z" fill="#707878"/></svg><div class="htitle" style="top:74px">Accommodation Search Results</div><div class="htitle" style="top:93px">For pax: 1A, 1C, 0I</div><svg class="ic" style="left:1241px;top:83px" width="16" height="16" viewBox="0 0 16 16"><path d="M3 3 L13 3 L13 5 L9 12 L7 12 L3 5 Z" fill="#808080"/><rect x="8" y="4" width="1" height="1" fill="#fff"/></svg><span class="tool dis" style="left:1237px">More</span><svg class="ic" style="left:1276px;top:83px" width="16" height="16" viewBox="0 0 16 16"><rect x="2" y="3" width="8" height="8" fill="#808080"/><rect x="3" y="4" width="1" height="2" fill="#fff"/></svg><span class="tool dis" style="left:1272px">Stop</span><svg class="ic" style="left:1331px;top:83px" width="16" height="16" viewBox="0 0 16 16"><defs><linearGradient id="fng" x1="0" x2="1"><stop offset="0" stop-color="#a8a8a8"/><stop offset="0.35" stop-color="#f4f4f4"/><stop offset="0.7" stop-color="#b0b0b0"/><stop offset="1" stop-color="#787878"/></linearGradient></defs><path d="M2 2 L14 2 L9 9 L8.8 15.5 L7.4 15.5 L7.2 9 Z" fill="url(#fng)"/><ellipse cx="8" cy="2" rx="6" ry="1.6" fill="#8c8c8c"/><ellipse cx="8" cy="2.2" rx="4.5" ry="0.9" fill="#d0d0d0"/></svg><span class="tool" style="left:1304px">Facilities Filter</span><svg class="ic" style="left:1399px;top:83px" width="16" height="16" viewBox="0 0 16 16"><path d="M0 2.5 L11 2.5 M1.5 2.5 L1.5 9 M3.5 2.5 L3.5 9 M5.5 2.5 L5.5 9 M7.5 2.5 L7.5 9 M9.5 2.5 L9.5 9 M1.5 9.5 L11.5 9.5 M11.5 1 L11.5 9.5 M11.5 1.5 L15 1.5 M9.5 9.5 L8.5 12" stroke="#6c6c6c" stroke-width="1" fill="none"/><circle cx="2.5" cy="14" r="1.6" fill="#fff" stroke="#f00000" stroke-width="1.2"/><circle cx="8.5" cy="14" r="1.6" fill="#fff" stroke="#f00000" stroke-width="1.2"/><path d="M4.2 14 L6.8 14" stroke="#707070"/></svg><span class="tool" style="left:1391px">Basket</span><svg class="ic" style="left:1450px;top:83px" width="16" height="16" viewBox="0 0 16 16"><ellipse cx="6" cy="4.5" rx="5" ry="3.8" fill="#6aa828"/><ellipse cx="6" cy="3.8" rx="3" ry="1.8" fill="#b0d870"/><path d="M6 8 L9 8 L8 12 L5 11Z" fill="#58a020"/><circle cx="9.5" cy="7.5" r="2.6" fill="#f01020"/><circle cx="13" cy="12.5" r="2.6" fill="#f01020"/><path d="M14.5 4.5 L8 15" stroke="#f01020" stroke-width="3"/><rect x="1" y="10" width="5" height="3" fill="#f01020"/><rect x="2" y="11" width="3" height="1" fill="#ffa0a0"/></svg><span class="tool" style="left:1434px">Nett Price</span><svg class="ic" style="left:1514px;top:83px" width="16" height="16" viewBox="0 0 16 16"><path d="M1 2 L3 0.5 L5 3 L3 4.5Z" fill="#805020"/><path d="M11 13 L13 11.5 L15 14 L13 15.5Z" fill="#805020"/><circle cx="8" cy="8.5" r="5.8" fill="#f0f4f8" stroke="#3080c0" stroke-width="1"/><path d="M8.5 13.5 A5 5 0 0 0 13 9" stroke="#40d0f0" stroke-width="1.5" fill="none"/><path d="M4 5 L8 8.5 L7 9.5Z" fill="#2080e0"/><path d="M7 9.5 L8 8.5 L12 12Z" fill="#f02010"/></svg><span class="tool" style="left:1500px">Navigate</span><svg class="ic" style="left:1559px;top:83px" width="16" height="16" viewBox="0 0 16 16"><path d="M3.5 3.5 L12.5 12.5 M12.5 3.5 L3.5 12.5" stroke="#d81830" stroke-width="3.6" stroke-linecap="round"/><path d="M4 4 L12 12 M12 4 L4 12" stroke="#f04858" stroke-width="1.4" stroke-linecap="round"/></svg><span class="tool" style="left:1554px">Close</span><div class="tsep" style="left:1382px"></div><div class="tsep" style="left:1491px"></div><div class="sres">Search results: 20/20</div><div class="tbl" style="left:217px;top:151px;width:1374px;height:900px"><div class="hc" style="left:2px;top:2px;width:75px"><span class="ht all">Resort</span></div><div class="hc" style="left:77px;top:2px;width:120px"><span class="ht all">Accommodation</span></div><div class="hc" style="left:197px;top:2px;width:40px"><span class="ht all">Rati<span class="el">...</span></span></div><div class="hc" style="left:237px;top:2px;width:75px"><span class="ht all">Board</span></div><div class="hc" style="left:312px;top:2px;width:90px"><span class="ht all">Room type</span><svg class="hfil" width="14" height="11" viewBox="0 0 14 11"><defs><linearGradient id="flg" x1="0" x2="1"><stop offset="0" stop-color="#fff"/><stop offset="1" stop-color="#90b0e0"/></linearGradient></defs><path d="M1 1 L13 1 L8.3 6.2 L8.3 10 L5.7 10 L5.7 6.2 Z" fill="url(#flg)" stroke="#000" stroke-width="1.1" stroke-linejoin="miter"/></svg></div><div class="hc" style="left:402px;top:2px;width:35px"><span class="ht all">DOW</span></div><div class="hc" style="left:437px;top:2px;width:68px"><span class="ht all">Check In</span></div><div class="hc" style="left:505px;top:2px;width:35px"><span class="ht all">DOW</span></div><div class="hc" style="left:540px;top:2px;width:68px"><span class="ht all">Check Out</span></div><div class="hc" style="left:608px;top:2px;width:62px"><span class="ht all">Supplier</span></div><div class="hc" style="left:670px;top:2px;width:25px"><span class="ht alc">Er</span></div><div class="hc" style="left:695px;top:2px;width:25px"><span class="ht all">NR</span></div><div class="hc" style="left:720px;top:2px;width:25px"><span class="ht all">MS</span></div><div class="hc" style="left:745px;top:2px;width:55px"><span class="ht alr">Price</span></div><div class="hc" style="left:800px;top:2px;width:55px"><span class="ht alr">Incl.Fl.PP</span></div><div class="hc" style="left:855px;top:2px;width:65px"><span class="ht alr hs">Basket</span><svg class="hsort" width="8" height="5" viewBox="0 0 8 5"><path d="M0 0 L8 0 L4 4.5 Z" fill="#8c8c8c"/></svg></div><div class="hc" style="left:920px;top:2px;width:55px"><span class="ht alr">Discount</span></div><div class="hc" style="left:975px;top:2px;width:25px"><span class="ht all">Of</span></div><div class="hc" style="left:1000px;top:2px;width:60px"><span class="ht all">Contract</span></div><div class="hc" style="left:1060px;top:2px;width:75px"><span class="ht all">Act. Supplier</span></div><div class="hc" style="left:1135px;top:2px;width:235px;border-right:none;box-shadow:inset 0 -1px 0 #808080"></div><div class="gline" style="top:34px;left:1135px;width:219px"></div><div class="gline" style="top:49px;left:1135px;width:219px"></div><div class="gline" style="top:64px;left:1135px;width:219px"></div><div class="gline" style="top:79px;left:1135px;width:219px"></div><div class="gline" style="top:94px;left:1135px;width:219px"></div><div class="gline" style="top:109px;left:1135px;width:219px"></div><div class="gline" style="top:124px;left:1135px;width:219px"></div><div class="gline" style="top:139px;left:1135px;width:219px"></div><div class="gline" style="top:154px;left:1135px;width:219px"></div><div class="gline" style="top:169px;left:1135px;width:219px"></div><div class="gline" style="top:184px;left:1135px;width:219px"></div><div class="gline" style="top:199px;left:1135px;width:219px"></div><div class="gline" style="top:214px;left:1135px;width:219px"></div><div class="gline" style="top:229px;left:1135px;width:219px"></div><div class="gline" style="top:244px;left:1135px;width:219px"></div><div class="gline" style="top:259px;left:1135px;width:219px"></div><div class="gline" style="top:274px;left:1135px;width:219px"></div><div class="gline" style="top:289px;left:1135px;width:219px"></div><div class="gline" style="top:304px;left:1135px;width:219px"></div><div class="gline" style="top:319px;left:1135px;width:219px"></div><div class="gline" style="top:334px;left:1135px;width:219px"></div><div class="gline" style="top:349px;left:1135px;width:219px"></div><div class="gline" style="top:364px;left:1135px;width:219px"></div><div class="gline" style="top:379px;left:1135px;width:219px"></div><div class="gline" style="top:394px;left:1135px;width:219px"></div><div class="gline" style="top:409px;left:1135px;width:219px"></div><div class="gline" style="top:424px;left:1135px;width:219px"></div><div class="gline" style="top:439px;left:1135px;width:219px"></div><div class="gline" style="top:454px;left:1135px;width:219px"></div><div class="gline" style="top:469px;left:1135px;width:219px"></div><div class="gline" style="top:484px;left:1135px;width:219px"></div><div class="gline" style="top:499px;left:1135px;width:219px"></div><div class="gline" style="top:514px;left:1135px;width:219px"></div><div class="gline" style="top:529px;left:1135px;width:219px"></div><div class="gline" style="top:544px;left:1135px;width:219px"></div><div class="gline" style="top:559px;left:1135px;width:219px"></div><div class="gline" style="top:574px;left:1135px;width:219px"></div><div class="gline" style="top:589px;left:1135px;width:219px"></div><div class="row" style="top:20px;left:2px;width:1133px"><div class="c all" style="left:0px;width:75px">Lake Buena<span class="el">...</span></div><div class="c all" style="left:75px;width:120px">Westgate Lakes and <span class="el">...</span></div><div class="c all" style="left:195px;width:40px">3.5</div><div class="c all" style="left:235px;width:75px">Room Only</div><div class="c all" style="left:310px;width:90px">Studio</div><div class="c all" style="left:400px;width:35px">Mon</div><div class="c all" style="left:435px;width:68px">03/07/2017</div><div class="c all" style="left:503px;width:35px">Thu</div><div class="c all" style="left:538px;width:68px">13/07/2017</div><div class="c all" style="left:606px;width:62px">Ocean B<span class="el">...</span></div><div class="c alc" style="left:668px;width:25px"></div><div class="c all" style="left:693px;width:25px"></div><div class="c all" style="left:718px;width:25px"></div><div class="c alr" style="left:743px;width:55px">878.81</div><div class="c alr" style="left:798px;width:55px">439.41</div><div class="c alr" style="left:853px;width:65px">878.81</div><div class="c alr" style="left:918px;width:55px">0.00</div><div class="c all" style="left:973px;width:25px"></div><div class="c all" style="left:998px;width:60px">XML</div><div class="c all" style="left:1058px;width:75px"></div></div><div class="row" style="top:35px;left:2px;width:1133px"><div class="c all" style="left:0px;width:75px">Orlando Int<span class="el">...</span></div><div class="c all" style="left:75px;width:120px">Westgate Lakes Res<span class="el">...</span></div><div class="c all" style="left:195px;width:40px">3.0</div><div class="c all" style="left:235px;width:75px">Room Only</div><div class="c all" style="left:310px;width:90px">Studio 1/4 Pax</div><div class="c all" style="left:400px;width:35px">Mon</div><div class="c all" style="left:435px;width:68px">03/07/2017</div><div class="c all" style="left:503px;width:35px">Thu</div><div class="c all" style="left:538px;width:68px">13/07/2017</div><div class="c all" style="left:606px;width:62px">Get A Bed</div><div class="c alc" style="left:668px;width:25px"><span class="ast">*</span></div><div class="c all" style="left:693px;width:25px"></div><div class="c all" style="left:718px;width:25px"></div><div class="c alr" style="left:743px;width:55px">987.33</div><div class="c alr" style="left:798px;width:55px">493.67</div><div class="c alr" style="left:853px;width:65px">987.33</div><div class="c alr" style="left:918px;width:55px">0.00</div><div class="c all" style="left:973px;width:25px"></div><div class="c all" style="left:998px;width:60px">XML</div><div class="c all" style="left:1058px;width:75px"></div></div></div></div></body></html>
